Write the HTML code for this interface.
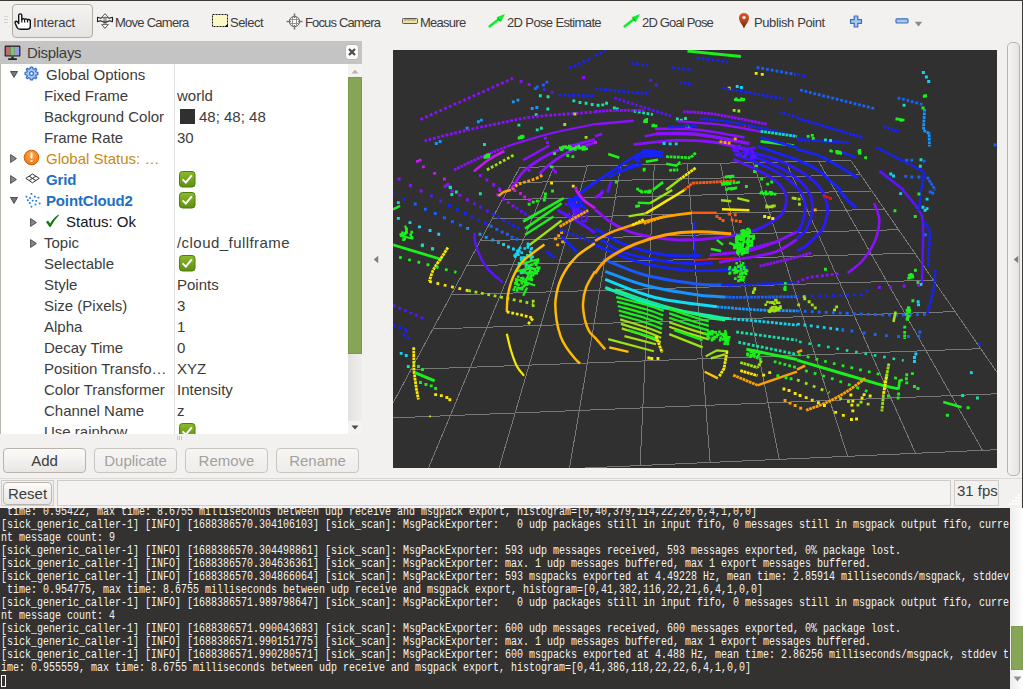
<!DOCTYPE html>
<html><head><meta charset="utf-8"><title>RViz</title>
<style>
html,body{margin:0;padding:0;}
body{width:1023px;height:689px;overflow:hidden;background:#f2f1f0;position:relative;font-family:"Liberation Sans","DejaVu Sans",sans-serif;color:#3c3c3c;}
.abs{position:absolute;}
#topline{left:0;top:0;width:1023px;height:1px;background:#3c3b37;}
#rightline{left:1022px;top:0;width:1px;height:508px;background:#3c3b37;}
.tb{position:absolute;top:15px;height:16px;line-height:16px;font-size:13px;letter-spacing:-0.6px;white-space:nowrap;color:#3c3c3c;}
.tbi{position:absolute;top:12px;width:18px;height:18px;}
#interact{left:12px;top:4px;width:79px;height:32px;border:1px solid #b3aca3;border-radius:4px;background:linear-gradient(#f4f3f2,#e6e4e2);}
#dtitle{left:0;top:41px;width:362px;height:23px;background:#c4c4c4;}
#dtitle span{position:absolute;left:27px;top:2px;font-size:15px;line-height:19px;letter-spacing:-0.3px;color:#3c3c3c;}
#closeb{left:346px;top:45px;width:12px;height:14px;border-radius:3px;background:#fbfbfa;box-shadow:0 0 0 0.5px #b5b0a8;}
#tree{left:1px;top:64px;width:347px;height:370px;background:#fff;overflow:hidden;}
#treeborder{left:0;top:64px;width:1px;height:370px;background:#b9b5ae;}
.row{position:absolute;left:0;width:347px;height:21px;line-height:21px;font-size:15px;white-space:nowrap;}
.row .l{position:absolute;top:0;}
.row .v{position:absolute;left:176px;top:0;}
#coldiv{left:173px;top:0;width:1px;height:370px;background:#e4e2df;}
.chk{position:absolute;left:177px;top:2px;width:17px;height:17px;}
.bold{font-weight:bold;color:#1e6fc3;letter-spacing:-0.15px;}
#sbar{left:348px;top:64px;width:14px;height:370px;background:linear-gradient(90deg,#e3e2e0,#efeeec);}
#sup{left:348px;top:64px;width:14px;height:13px;background:#f4f3f2;}
#sthumb{left:348px;top:77px;width:14px;height:277px;background:#87a556;box-shadow:inset 0 0 0 1px #7a9a49;}
#sdown{left:348px;top:421px;width:14px;height:13px;background:#f4f3f2;}
.btn{position:absolute;top:448px;height:23px;width:81px;border:1px solid #b9b3ab;border-radius:4px;background:linear-gradient(#fbfbfa,#e9e7e5);font-size:15px;line-height:23px;text-align:center;color:#3c3c3c;}
.btn.dis{color:#a3a19d;background:linear-gradient(#f6f5f4,#eeedeb);border-color:#c9c5bf;}
#view{left:393px;top:50px;width:604px;height:418px;background:#303030;overflow:hidden;}
#rtab{left:1007px;top:42px;width:13px;height:434px;border:1px solid #b9b3ab;border-radius:5px;background:linear-gradient(90deg,#f4f3f2,#e6e4e2);box-sizing:border-box;}
#sep{left:0;top:478px;width:1022px;height:1px;background:#dcdad7;}
#resetframe{left:1px;top:480px;width:53px;height:26px;border:1px solid #cfccc8;box-sizing:border-box;}
#resetb{left:3px;top:482px;width:47px;height:21px;border:1px solid #b9b3ab;border-radius:4px;background:linear-gradient(#fbfbfa,#e9e7e5);font-size:15px;line-height:21px;text-align:center;}
#statusin{left:57px;top:480px;width:894px;height:26px;border:1px solid #cfccc8;box-sizing:border-box;background:#f4f3f2;}
#fps{left:954px;top:480px;width:45px;height:26px;border:1px solid #cfccc8;box-sizing:border-box;font-size:15px;line-height:19px;text-indent:2px;white-space:nowrap;letter-spacing:0px;}
#term{left:0;top:508px;width:1010px;height:181px;background:#333230;overflow:hidden;}
#term pre{position:absolute;left:1px;top:-2px;margin:0;font-family:"Liberation Mono","DejaVu Sans Mono",monospace;font-size:12px;line-height:13px;color:#f4f4f2;transform:scaleX(0.8333);transform-origin:0 0;white-space:pre;}
#tsb{left:1010px;top:508px;width:13px;height:181px;background:linear-gradient(90deg,#ececec,#ffffff);}
#tthumb{left:1011px;top:626px;width:12px;height:44px;background:#87a556;box-shadow:inset 0 0 0 1px #7d9c4c;}
#cursor{left:1px;top:675px;width:5px;height:12px;border:1px solid #fff;box-sizing:border-box;}
</style></head>
<body>
<div class="abs" id="topline"></div>
<div class="abs" id="rightline"></div>

<!-- toolbar -->
<div class="abs" id="interact"></div>
<div class="tb" style="left:33px;letter-spacing:-0.17px">Interact</div>
<div class="tb" style="left:115px;letter-spacing:-0.74px">Move Camera</div>
<div class="tb" style="left:230px;letter-spacing:-0.52px">Select</div>
<div class="tb" style="left:305px;letter-spacing:-0.85px">Focus Camera</div>
<div class="tb" style="left:420px;letter-spacing:-0.74px">Measure</div>
<div class="tb" style="left:507px;letter-spacing:-0.63px">2D Pose Estimate</div>
<div class="tb" style="left:642px;letter-spacing:-0.83px">2D Goal Pose</div>
<div class="tb" style="left:754px;letter-spacing:-0.39px">Publish Point</div>

<!-- displays panel -->
<div class="abs" id="dtitle"><span>Displays</span></div>
<div class="abs" id="closeb"></div>
<div class="abs" id="treeborder"></div>
<div class="abs" id="tree">
<div class="abs" id="coldiv"></div>
<div class="row" style="top:0"><span class="l" style="left:45px">Global Options</span></div>
<div class="row" style="top:21px"><span class="l" style="left:43px">Fixed Frame</span><span class="v">world</span></div>
<div class="row" style="top:42px"><span class="l" style="left:43px">Background Color</span><span class="v" style="left:198px">48; 48; 48</span><span class="abs" style="left:179px;top:3px;width:15px;height:15px;background:#303030"></span></div>
<div class="row" style="top:63px"><span class="l" style="left:43px">Frame Rate</span><span class="v">30</span></div>
<div class="row" style="top:84px"><span class="l" style="left:45px;color:#c78a13">Global Status: …</span></div>
<div class="row" style="top:105px"><span class="l bold" style="left:45px">Grid</span></div>
<div class="row" style="top:126px"><span class="l bold" style="left:45px">PointCloud2</span></div>
<div class="row" style="top:147px"><span class="l" style="left:65px;color:#161616">Status: Ok</span></div>
<div class="row" style="top:168px"><span class="l" style="left:43px">Topic</span><span class="v" style="letter-spacing:0.45px">/cloud_fullframe</span></div>
<div class="row" style="top:189px"><span class="l" style="left:43px">Selectable</span></div>
<div class="row" style="top:210px"><span class="l" style="left:43px">Style</span><span class="v">Points</span></div>
<div class="row" style="top:231px"><span class="l" style="left:43px">Size (Pixels)</span><span class="v">3</span></div>
<div class="row" style="top:252px"><span class="l" style="left:43px">Alpha</span><span class="v">1</span></div>
<div class="row" style="top:273px"><span class="l" style="left:43px">Decay Time</span><span class="v">0</span></div>
<div class="row" style="top:294px"><span class="l" style="left:43px">Position Transfo…</span><span class="v">XYZ</span></div>
<div class="row" style="top:315px"><span class="l" style="left:43px">Color Transformer</span><span class="v">Intensity</span></div>
<div class="row" style="top:336px"><span class="l" style="left:43px">Channel Name</span><span class="v">z</span></div>
<div class="row" style="top:357px"><span class="l" style="left:43px">Use rainbow</span></div>
<!-- expand arrows -->
<svg class="abs" style="left:9px;top:7px" width="8" height="7" viewBox="0 0 8 7"><path d="M0.5 0.5 H7.5 L4 6.4 Z" fill="#777" stroke="#444" stroke-width="0.9"/></svg>
<svg class="abs" style="left:9px;top:133px" width="8" height="7" viewBox="0 0 8 7"><path d="M0.5 0.5 H7.5 L4 6.4 Z" fill="#777" stroke="#444" stroke-width="0.9"/></svg>
<svg class="abs" style="left:9px;top:90px" width="7" height="9" viewBox="0 0 7 9"><path d="M0.6 0.6 V8.4 L6.4 4.5 Z" fill="#888" stroke="#444" stroke-width="0.9"/></svg>
<svg class="abs" style="left:9px;top:111px" width="7" height="9" viewBox="0 0 7 9"><path d="M0.6 0.6 V8.4 L6.4 4.5 Z" fill="#888" stroke="#444" stroke-width="0.9"/></svg>
<svg class="abs" style="left:29px;top:154px" width="7" height="9" viewBox="0 0 7 9"><path d="M0.6 0.6 V8.4 L6.4 4.5 Z" fill="#888" stroke="#444" stroke-width="0.9"/></svg>
<svg class="abs" style="left:29px;top:175px" width="7" height="9" viewBox="0 0 7 9"><path d="M0.6 0.6 V8.4 L6.4 4.5 Z" fill="#888" stroke="#444" stroke-width="0.9"/></svg>
<!-- gear -->
<svg class="abs" style="left:23px;top:2px" width="15" height="15" viewBox="-7.5 -7.5 15 15"><g fill="#a9c6ee" stroke="#2f6dc6" stroke-width="1.25"><path d="M-1.1 -6.4 H1.1 L1.5 -4.7 L2.6 -4.2 L4.1 -5.2 L5.2 -4.1 L4.2 -2.6 L4.7 -1.5 L6.4 -1.1 V1.1 L4.7 1.5 L4.2 2.6 L5.2 4.1 L4.1 5.2 L2.6 4.2 L1.5 4.7 L1.1 6.4 H-1.1 L-1.5 4.7 L-2.6 4.2 L-4.1 5.2 L-5.2 4.1 L-4.2 2.6 L-4.7 1.5 L-6.4 1.1 V-1.1 L-4.7 -1.5 L-4.2 -2.6 L-5.2 -4.1 L-4.1 -5.2 L-2.6 -4.2 L-1.5 -4.7 Z" stroke-linejoin="round"/><circle r="1.9" fill="#fff"/></g></svg>
<!-- warning -->
<svg class="abs" style="left:22px;top:85px" width="17" height="17" viewBox="0 0 17 17"><defs><radialGradient id="og" cx="0.5" cy="0.35" r="0.7"><stop offset="0" stop-color="#fca84a"/><stop offset="1" stop-color="#f0730a"/></radialGradient></defs><circle cx="8.5" cy="8.5" r="7.3" fill="url(#og)" stroke="#cf5e06" stroke-width="1"/><rect x="7.5" y="3.6" width="2" height="6" rx="0.6" fill="#fff"/><rect x="7.5" y="11" width="2" height="2.1" rx="0.6" fill="#fff"/></svg>
<!-- grid -->
<svg class="abs" style="left:24px;top:109px" width="15" height="11" viewBox="0 0 15 11"><path d="M0.8 5.3 L7.5 1 L14.2 5.3 L7.5 9.8 Z M4.1 3.2 L10.9 7.6 M10.9 3.2 L4.1 7.6" fill="#fff" stroke="#333" stroke-width="1" stroke-linejoin="round"/></svg>
<!-- pointcloud -->
<svg class="abs" style="left:24px;top:128px" width="16" height="16" viewBox="0 0 16 16"><g fill="#1c79e0"><rect x="5.6" y="1" width="1.7" height="1.7"/><rect x="0.6" y="3.8" width="1.7" height="1.7"/><rect x="4.2" y="5.2" width="1.7" height="1.7"/><rect x="9" y="3.8" width="1.7" height="1.7"/><rect x="12.6" y="4.8" width="1.7" height="1.7"/><rect x="2" y="7.3" width="1.7" height="1.7"/><rect x="6.8" y="7.8" width="1.7" height="1.7"/><rect x="10.4" y="8" width="1.7" height="1.7"/><rect x="4" y="10.2" width="1.7" height="1.7"/><rect x="9.6" y="11.6" width="1.7" height="1.7"/><rect x="13.8" y="10.6" width="1.7" height="1.7"/><rect x="5.6" y="13.8" width="1.7" height="1.7"/></g></svg>
<!-- check -->
<svg class="abs" style="left:44px;top:150px" width="15" height="14" viewBox="0 0 15 14"><path d="M1 8 L3 6.6 L5.2 9.6 Q8.6 3.6 13.6 0.6 L14 1.2 Q9.4 5.6 5.6 13 L4.6 13 Z" fill="#137a13"/></svg>
<!-- checkboxes -->
<svg class="abs" style="left:178px;top:107px" width="17" height="17" viewBox="0 0 17 17"><defs><linearGradient id="cg" x1="0" y1="0" x2="0" y2="1"><stop offset="0" stop-color="#8dba2d"/><stop offset="1" stop-color="#5d8f10"/></linearGradient></defs><rect x="0.5" y="0.5" width="15.5" height="15.5" rx="3" fill="url(#cg)" stroke="#4f7d0e" stroke-width="1"/><path d="M3.6 8.4 L6.8 11.6 L12.8 4.4" fill="none" stroke="#fff" stroke-width="2"/></svg>
<svg class="abs" style="left:178px;top:128px" width="17" height="17" viewBox="0 0 17 17"><rect x="0.5" y="0.5" width="15.5" height="15.5" rx="3" fill="url(#cg)" stroke="#4f7d0e" stroke-width="1"/><path d="M3.6 8.4 L6.8 11.6 L12.8 4.4" fill="none" stroke="#fff" stroke-width="2"/></svg>
<svg class="abs" style="left:178px;top:191px" width="17" height="17" viewBox="0 0 17 17"><rect x="0.5" y="0.5" width="15.5" height="15.5" rx="3" fill="url(#cg)" stroke="#4f7d0e" stroke-width="1"/><path d="M3.6 8.4 L6.8 11.6 L12.8 4.4" fill="none" stroke="#fff" stroke-width="2"/></svg>
<svg class="abs" style="left:178px;top:359px" width="17" height="17" viewBox="0 0 17 17"><rect x="0.5" y="0.5" width="15.5" height="15.5" rx="3" fill="url(#cg)" stroke="#4f7d0e" stroke-width="1"/><path d="M3.6 8.4 L6.8 11.6 L12.8 4.4" fill="none" stroke="#fff" stroke-width="2"/></svg>

</div>
<div class="abs" id="sbar"></div>
<div class="abs" id="sup"></div>
<div class="abs" id="sthumb"></div>
<div class="abs" id="sdown"></div>

<div class="btn" style="left:3px">Add</div>
<div class="btn dis" style="left:94px">Duplicate</div>
<div class="btn dis" style="left:185px">Remove</div>
<div class="btn dis" style="left:276px">Rename</div>

<!-- 3D view -->
<div class="abs" id="view">
<svg style="position:absolute;left:0;top:0" width="604" height="418" viewBox="393 50 604 418"><path d="M352.5 478.3L519.8 167.4M425.6 475.0L553.7 166.7M497.9 471.8L587.4 166.0M569.4 468.7L620.9 165.3M640.1 465.5L654.3 164.6M710.1 462.4L687.5 163.9M779.3 459.3L720.5 163.2M847.7 456.3L753.3 162.5M915.5 453.3L786.0 161.8M982.5 450.3L818.5 161.1M1048.8 447.4L850.8 160.5M352.5 478.3L1048.8 447.4M384.8 418.2L1011.4 393.2M411.1 369.4L980.7 348.7M432.8 329.0L955.1 311.6M451.2 294.9L933.4 280.1M466.8 265.9L914.8 253.1M480.3 240.8L898.6 229.7M492.1 219.0L884.4 209.2M502.4 199.7L871.9 191.0M511.6 182.7L860.8 174.9M519.8 167.4L850.8 160.5" stroke="#787878" stroke-width="1" fill="none" shape-rendering="crispEdges"/>
<path d="M420.4 119.5 L512.9 78.4" stroke="#8a10ff" stroke-width="2.8" fill="none" stroke-dasharray="2.8 2.4"/>
<path d="M519.6 80.0h2.9v2.9h-2.9zM527.7 83.1h2.9v2.9h-2.9zM582.2 76.0h2.9v2.9h-2.9z" fill="#8a10ff"/>
<path d="M568.8 68.3 L592.1 58.1" stroke="#1622ff" stroke-width="2.8" fill="none" stroke-dasharray="2.8 2.2"/>
<path d="M533.8 87.2h2.9v2.9h-2.9zM541.9 83.5h2.9v2.9h-2.9zM545.4 80.7h2.9v2.9h-2.9zM535.8 85.5h2.9v2.9h-2.9z" fill="#1a62ff"/>
<path d="M542.9 88.2h2.9v2.9h-2.9zM550.7 90.8h2.9v2.9h-2.9z" fill="#5a14ff"/>
<path d="M558.6 95.1 L595.0 95.7" stroke="#1622ff" stroke-width="2.8" fill="none" stroke-dasharray="2.8 1.8"/>
<path d="M538.9 94.3h2.9v2.9h-2.9zM546.6 95.3h2.9v2.9h-2.9zM572.4 99.4h2.9v2.9h-2.9zM578.5 101.0h2.9v2.9h-2.9zM584.6 101.8h2.9v2.9h-2.9zM590.7 103.0h2.9v2.9h-2.9zM546.4 107.5h2.9v2.9h-2.9zM534.8 113.2h2.9v2.9h-2.9zM517.5 123.7h2.9v2.9h-2.9zM535.8 128.4h2.9v2.9h-2.9zM539.9 126.8h2.9v2.9h-2.9zM483.0 143.0h2.9v2.9h-2.9z" fill="#14e2a4"/>
<path d="M511.9 100.4h2.9v2.9h-2.9zM516.5 98.7h2.9v2.9h-2.9zM530.7 107.1h2.9v2.9h-2.9zM535.4 106.1h2.9v2.9h-2.9zM476.9 120.3h2.9v2.9h-2.9zM479.9 118.7h2.9v2.9h-2.9zM465.7 126.8h2.9v2.9h-2.9zM434.8 142.0h2.9v2.9h-2.9zM438.7 140.0h2.9v2.9h-2.9z" fill="#1696ff"/>
<path d="M424.5 140.8 C429.4 139.6 442.3 136.1 454.0 133.3 C465.6 130.5 481.1 126.9 494.6 124.2 C508.2 121.4 518.5 118.7 535.2 116.7 C552.0 114.6 585.0 112.8 595.0 112.0" stroke="#8a10ff" stroke-width="2.8" fill="none" stroke-dasharray="2.8 1.6"/>
<path d="M454.0 169.9 C459.0 167.5 475.6 159.5 484.4 155.7 C493.3 151.8 503.1 148.2 506.8 146.7" stroke="#8a10ff" stroke-width="2.8" fill="none" stroke-dasharray="2.8 0.8"/>
<path d="M506.8 146.7 C508.8 146.0 510.9 144.9 519.0 142.5 C527.1 140.1 542.9 135.3 555.6 132.3 C568.2 129.3 588.4 125.5 595.0 124.2" stroke="#8a10ff" stroke-width="2.2" fill="none" stroke-linecap="butt"/>
<path d="M473.9 171.5 C476.3 169.6 483.4 163.2 488.5 159.7 C493.6 156.3 501.7 152.5 504.4 151.0" stroke="#c818f0" stroke-width="2.6" fill="none" stroke-linecap="butt"/>
<path d="M484.8 154.6h2.6v2.6h-2.6zM486.6 153.4h2.6v2.6h-2.6zM486.2 154.4h2.6v2.6h-2.6zM483.7 156.2h2.6v2.6h-2.6zM483.5 156.1h2.6v2.6h-2.6zM486.1 155.7h2.6v2.6h-2.6zM483.7 155.4h2.6v2.6h-2.6zM487.4 155.3h2.6v2.6h-2.6zM486.5 154.3h2.6v2.6h-2.6zM488.0 153.2h2.6v2.6h-2.6zM485.5 156.0h2.6v2.6h-2.6zM484.5 155.9h2.6v2.6h-2.6zM486.8 154.1h2.6v2.6h-2.6zM486.0 153.7h2.6v2.6h-2.6z" fill="#1cf01c"/>
<path d="M521.1 135.2h2.6v2.6h-2.6zM519.2 136.2h2.6v2.6h-2.6zM519.7 135.3h2.6v2.6h-2.6zM521.9 135.6h2.6v2.6h-2.6zM518.8 136.3h2.6v2.6h-2.6zM520.5 136.5h2.6v2.6h-2.6zM521.2 134.8h2.6v2.6h-2.6zM519.9 136.4h2.6v2.6h-2.6zM518.2 136.2h2.6v2.6h-2.6zM517.7 136.8h2.6v2.6h-2.6z" fill="#1cf01c"/>
<path d="M486.9 169.9 L514.5 154.7" stroke="#9ee212" stroke-width="2.8" fill="none" stroke-dasharray="2.8 1.8"/>
<path d="M523.1 160.1 L549.5 145.5" stroke="#8a10ff" stroke-width="2.4" fill="none" stroke-linecap="butt"/>
<path d="M544.0 136.9h2.9v2.9h-2.9zM546.0 141.0h2.9v2.9h-2.9z" fill="#8a10ff"/>
<path d="M510.9 190.0 C512.9 187.0 518.3 177.0 523.1 171.9 C527.8 166.9 533.2 163.5 539.3 159.7 C545.4 156.0 550.4 153.0 559.6 149.6 C568.9 146.2 589.1 141.1 595.0 139.4" stroke="#8a10ff" stroke-width="2.8" fill="none" stroke-linecap="butt"/>
<path d="M539.3 174.0 C541.3 172.1 546.4 166.5 551.5 162.8 C556.6 159.1 562.5 155.0 569.8 151.6 C577.0 148.2 590.8 144.0 595.0 142.5" stroke="#8a10ff" stroke-width="2.8" fill="none" stroke-linecap="butt"/>
<path d="M580.1 146.9h2.6v2.6h-2.6zM583.2 145.9h2.6v2.6h-2.6zM578.1 147.0h2.6v2.6h-2.6zM574.8 146.5h2.6v2.6h-2.6zM571.8 147.3h2.6v2.6h-2.6zM560.1 147.5h2.6v2.6h-2.6zM581.7 145.8h2.6v2.6h-2.6zM569.3 147.3h2.6v2.6h-2.6zM559.0 146.5h2.6v2.6h-2.6zM562.0 145.6h2.6v2.6h-2.6zM569.5 148.2h2.6v2.6h-2.6zM560.6 146.4h2.6v2.6h-2.6zM574.0 148.2h2.6v2.6h-2.6zM581.6 148.1h2.6v2.6h-2.6zM566.3 146.3h2.6v2.6h-2.6zM568.5 148.2h2.6v2.6h-2.6zM563.3 145.6h2.6v2.6h-2.6zM565.0 146.6h2.6v2.6h-2.6zM575.1 145.7h2.6v2.6h-2.6zM568.8 146.9h2.6v2.6h-2.6zM585.4 147.4h2.6v2.6h-2.6zM573.0 147.1h2.6v2.6h-2.6zM577.6 144.8h2.6v2.6h-2.6zM583.9 147.8h2.6v2.6h-2.6zM583.2 147.9h2.6v2.6h-2.6zM569.5 146.2h2.6v2.6h-2.6zM561.3 147.2h2.6v2.6h-2.6zM564.3 145.3h2.6v2.6h-2.6zM568.0 144.8h2.6v2.6h-2.6zM561.2 146.1h2.6v2.6h-2.6z" fill="#1cf01c"/>
<path d="M560.2 148.1h2.9v2.9h-2.9zM566.3 154.2h2.9v2.9h-2.9zM571.4 155.2h2.9v2.9h-2.9zM553.1 152.2h2.9v2.9h-2.9zM550.1 165.4h2.9v2.9h-2.9z" fill="#1cf01c"/>
<path d="M415.9 159.9h2.9v2.9h-2.9zM418.6 158.7h2.9v2.9h-2.9zM422.0 165.4h2.9v2.9h-2.9zM433.2 171.9h2.9v2.9h-2.9zM443.0 177.6h2.9v2.9h-2.9z" fill="#c818f0"/>
<path d="M397.6 177.6h2.9v2.9h-2.9zM408.8 183.7h2.9v2.9h-2.9zM445.4 183.7h2.9v2.9h-2.9zM446.8 182.7h2.9v2.9h-2.9z" fill="#8a10ff"/>
<path d="M449.1 186.3h2.9v2.9h-2.9z" fill="#14e2a4"/>
<path d="M478.9 174.1h2.9v2.9h-2.9zM485.4 178.6h2.9v2.9h-2.9zM492.1 183.1h2.9v2.9h-2.9zM498.2 187.7h2.9v2.9h-2.9zM527.7 168.9h2.9v2.9h-2.9zM554.1 170.5h2.9v2.9h-2.9zM552.1 168.4h2.9v2.9h-2.9z" fill="#8a10ff"/>
<path d="M511.9 189.2 C513.1 188.4 514.9 185.9 519.0 184.1 C523.1 182.3 532.2 180.1 536.3 178.4 C540.3 176.8 542.2 175.0 543.4 174.4" stroke="#ffa200" stroke-width="2.8" fill="none" stroke-dasharray="2.8 1.6"/>
<path d="M550.1 181.7h2.9v2.9h-2.9zM571.8 184.7h2.9v2.9h-2.9z" fill="#f6ea00"/>
<path d="M574.4 186.7h2.9v2.9h-2.9z" fill="#c818f0"/>
<path d="M584.0 190.0 L595.0 182.1" stroke="#1622ff" stroke-width="2.6" fill="none" stroke-linecap="butt"/>
<path d="M563.3 123.1h2.9v2.9h-2.9zM573.4 112.6h2.9v2.9h-2.9zM584.6 135.9h2.9v2.9h-2.9z" fill="#9ee212"/>
<path d="M687.5 51.0 L740.9 56.5" stroke="#1cf01c" stroke-width="2.8" fill="none" stroke-linecap="butt"/>
<path d="M696.6 58.1 L728.1 61.8" stroke="#1622ff" stroke-width="2.8" fill="none" stroke-dasharray="2.8 2.2"/>
<path d="M631.2 63.2 L648.2 65.2" stroke="#1622ff" stroke-width="2.8" fill="none" stroke-dasharray="2.8 2.2"/>
<path d="M672.2 67.9 L692.5 69.7" stroke="#1622ff" stroke-width="2.8" fill="none" stroke-dasharray="2.8 2.2"/>
<path d="M679.3 82.1 L692.5 84.5" stroke="#1622ff" stroke-width="2.8" fill="none" stroke-dasharray="2.8 1.7"/>
<path d="M595.0 55.7 L605.2 51.0" stroke="#1622ff" stroke-width="2.8" fill="none" stroke-dasharray="2.8 2.2"/>
<path d="M649.4 79.0h2.9v2.9h-2.9zM654.9 83.5h2.9v2.9h-2.9z" fill="#5a14ff"/>
<path d="M595.0 88.6 L645.8 93.7 L650.3 90.2" stroke="#1622ff" stroke-width="2.8" fill="none" stroke-dasharray="2.8 1.8"/>
<path d="M614.3 97.8 C617.9 98.9 626.2 101.8 635.6 104.9 C645.1 107.9 665.3 114.2 671.2 116.0" stroke="#5a14ff" stroke-width="2.8" fill="none" stroke-dasharray="2.8 1.6"/>
<path d="M596.6 103.8h2.9v2.9h-2.9zM601.3 103.4h2.9v2.9h-2.9zM605.1 101.8h2.9v2.9h-2.9zM612.9 106.5h2.9v2.9h-2.9zM615.9 107.5h2.9v2.9h-2.9zM675.9 117.6h2.9v2.9h-2.9zM679.9 118.7h2.9v2.9h-2.9zM684.0 117.0h2.9v2.9h-2.9z" fill="#14e2a4"/>
<path d="M633.6 111.0 L652.9 114.6" stroke="#14e2a4" stroke-width="2.8" fill="none" stroke-dasharray="2.8 1.6"/>
<path d="M595.0 111.6 C598.4 111.4 607.2 110.6 615.3 110.4 C623.4 110.2 639.0 110.4 643.8 110.4" stroke="#8a10ff" stroke-width="2.8" fill="none" stroke-dasharray="2.8 0.8"/>
<path d="M595.0 124.2 L633.6 120.7" stroke="#8a10ff" stroke-width="2.4" fill="none" stroke-linecap="butt"/>
<path d="M595.0 136.4 L602.1 133.7" stroke="#8a10ff" stroke-width="2.6" fill="none" stroke-linecap="butt"/>
<path d="M594.2 141.0h2.9v2.9h-2.9z" fill="#c818f0"/>
<path d="M644.5 118.9h2.6v2.6h-2.6zM643.2 120.5h2.6v2.6h-2.6zM643.4 119.7h2.6v2.6h-2.6zM644.3 119.9h2.6v2.6h-2.6zM643.5 120.0h2.6v2.6h-2.6zM645.5 118.1h2.6v2.6h-2.6zM644.2 119.2h2.6v2.6h-2.6zM644.1 118.9h2.6v2.6h-2.6zM645.3 120.5h2.6v2.6h-2.6z" fill="#1cf01c"/>
<path d="M654.8 124.6h2.6v2.6h-2.6zM651.9 124.1h2.6v2.6h-2.6zM651.4 124.7h2.6v2.6h-2.6zM653.2 124.7h2.6v2.6h-2.6zM652.2 123.8h2.6v2.6h-2.6zM654.8 124.8h2.6v2.6h-2.6zM654.6 124.7h2.6v2.6h-2.6z" fill="#1cf01c"/>
<path d="M685.1 125.5h2.6v2.6h-2.6zM685.6 124.7h2.6v2.6h-2.6zM685.2 125.8h2.6v2.6h-2.6zM688.0 125.4h2.6v2.6h-2.6zM688.0 125.3h2.6v2.6h-2.6zM685.0 125.1h2.6v2.6h-2.6z" fill="#1cf01c"/>
<path d="M756.6 67.3 L795.2 74.4" stroke="#1a62ff" stroke-width="2.8" fill="none" stroke-dasharray="2.8 2.0"/>
<path d="M754.7 71.9h2.9v2.9h-2.9zM760.8 72.9h2.9v2.9h-2.9zM727.7 86.8h2.9v2.9h-2.9z" fill="#f6ea00"/>
<path d="M735.8 85.1h2.9v2.9h-2.9zM739.9 86.1h2.9v2.9h-2.9z" fill="#14d2f2"/>
<path d="M722.6 88.2 L784.0 98.8" stroke="#1622ff" stroke-width="2.8" fill="none" stroke-dasharray="2.8 1.6"/>
<path d="M788.6 98.3h2.9v2.9h-2.9z" fill="#1622ff"/>
<path d="M735.0 97.5h2.6v2.6h-2.6zM739.2 98.9h2.6v2.6h-2.6zM741.3 98.0h2.6v2.6h-2.6zM739.5 98.7h2.6v2.6h-2.6zM733.9 98.4h2.6v2.6h-2.6zM742.0 98.7h2.6v2.6h-2.6zM740.4 98.0h2.6v2.6h-2.6zM734.8 98.7h2.6v2.6h-2.6zM736.3 98.7h2.6v2.6h-2.6zM742.6 97.9h2.6v2.6h-2.6zM737.0 99.0h2.6v2.6h-2.6zM740.2 97.4h2.6v2.6h-2.6z" fill="#1cf01c"/>
<path d="M732.7 108.9h2.9v2.9h-2.9zM737.4 109.5h2.9v2.9h-2.9z" fill="#9ee212"/>
<path d="M778.9 112.0 L797.0 117.1" stroke="#1622ff" stroke-width="2.8" fill="none" stroke-dasharray="2.8 1.6"/>
<path d="M683.4 111.6 C689.0 112.1 703.0 112.5 716.9 114.6 C730.8 116.7 758.4 122.6 766.7 124.2" stroke="#8a10ff" stroke-width="2.8" fill="none" stroke-dasharray="2.8 0.6"/>
<path d="M699.7 118.5 C705.9 119.3 721.0 120.2 737.2 123.2 C753.5 126.1 787.0 134.2 797.0 136.4" stroke="#1622ff" stroke-width="2.6" fill="none" stroke-dasharray="2.6 0.6"/>
<path d="M677.3 121.1 C685.3 121.8 710.7 123.3 725.1 125.2 C739.4 127.1 757.2 131.1 763.7 132.3" stroke="#8a10ff" stroke-width="2.4" fill="none" stroke-linecap="butt"/>
<path d="M654.9 128.8 C661.9 129.0 681.7 128.2 696.6 129.7 C711.5 131.1 736.4 136.1 744.4 137.4" stroke="#8a10ff" stroke-width="2.6" fill="none" stroke-linecap="butt"/>
<path d="M656.0 133.7 C662.7 133.8 681.0 132.7 696.6 134.3 C712.2 136.0 740.6 142.0 749.4 143.5" stroke="#8a10ff" stroke-width="3.4" fill="none" stroke-linecap="butt"/>
<path d="M644.8 136.4 L660.0 133.3" stroke="#8a10ff" stroke-width="2.4" fill="none" stroke-linecap="butt"/>
<path d="M633.6 144.5 C640.7 143.8 662.4 140.8 676.3 140.4 C690.2 140.1 705.4 140.9 716.9 142.5 C728.4 144.0 740.6 148.4 745.4 149.6" stroke="#8a10ff" stroke-width="2.8" fill="none" stroke-linecap="butt"/>
<path d="M668.2 127.2 L696.6 125.6" stroke="#1622ff" stroke-width="2.8" fill="none" stroke-dasharray="2.8 0.6"/>
<path d="M662.6 142.0h2.9v2.9h-2.9zM668.7 142.4h2.9v2.9h-2.9zM674.8 142.4h2.9v2.9h-2.9z" fill="#14d2f2"/>
<path d="M719.5 140.4h2.9v2.9h-2.9zM723.6 141.0h2.9v2.9h-2.9zM727.7 141.6h2.9v2.9h-2.9zM733.8 137.4h2.9v2.9h-2.9z" fill="#ffa200"/>
<path d="M743.6 125.4h1.6v1.6h-1.6zM748.6 126.4h1.6v1.6h-1.6z" fill="#e41212"/>
<path d="M760.6 131.3 L797.0 136.4" stroke="#14e2a4" stroke-width="2.8" fill="none" stroke-dasharray="2.8 0.8"/>
<path d="M760.6 141.4 L794.1 145.5" stroke="#1cf01c" stroke-width="2.6" fill="none" stroke-linecap="butt"/>
<path d="M760.6 137.4 L797.0 147.5" stroke="#1622ff" stroke-width="2.6" fill="none" stroke-linecap="butt"/>
<path d="M757.6 146.5 L797.0 159.7" stroke="#1622ff" stroke-width="2.6" fill="none" stroke-linecap="butt"/>
<path d="M743.3 149.6 L755.5 147.5" stroke="#5a14ff" stroke-width="2.6" fill="none" stroke-linecap="butt"/>
<path d="M569.6 208.3 C570.4 206.7 571.9 201.6 574.3 198.7 C576.7 195.8 580.3 193.5 583.9 190.7 C587.5 187.9 591.5 185.0 595.9 181.9 C600.3 178.9 605.5 175.5 610.3 172.3 C615.1 169.1 619.9 165.8 624.7 162.7 C629.5 159.7 634.5 155.9 639.0 154.0 C643.6 152.0 649.7 151.6 651.8 151.1" stroke="#1622ff" stroke-width="2.6" fill="none" stroke-linecap="butt"/>
<path d="M608.7 177.1 C610.6 176.2 616.4 173.3 619.9 171.9 C623.3 170.4 625.7 169.6 629.5 168.3 C633.2 167.1 640.1 165.0 642.2 164.3" stroke="#1622ff" stroke-width="2.6" fill="none" stroke-linecap="butt"/>
<path d="M634.2 158.4 C636.6 158.0 643.8 156.0 648.6 155.6 C653.4 155.1 660.6 155.8 663.0 155.9" stroke="#1622ff" stroke-width="2.6" fill="none" stroke-linecap="butt"/>
<path d="M599.1 197.9 L603.1 189.9" stroke="#5a14ff" stroke-width="3.4" fill="none" stroke-linecap="butt"/>
<path d="M607.4 192.6 L611.1 181.4" stroke="#5a14ff" stroke-width="3.0" fill="none" stroke-linecap="butt"/>
<path d="M642.2 150.4 L663.0 152.4" stroke="#1622ff" stroke-width="2.6" fill="none" stroke-linecap="butt"/>
<path d="M571.0 208.8h3.0v3.0h-3.0zM573.9 204.4h3.0v3.0h-3.0zM582.8 206.0h3.0v3.0h-3.0zM576.4 210.5h3.0v3.0h-3.0zM575.1 209.5h3.0v3.0h-3.0zM580.7 199.0h3.0v3.0h-3.0zM572.5 200.3h3.0v3.0h-3.0zM572.3 205.0h3.0v3.0h-3.0zM572.6 202.3h3.0v3.0h-3.0zM573.9 202.9h3.0v3.0h-3.0zM577.2 210.0h3.0v3.0h-3.0zM574.9 210.3h3.0v3.0h-3.0zM576.1 204.1h3.0v3.0h-3.0zM576.4 195.9h3.0v3.0h-3.0zM575.2 198.5h3.0v3.0h-3.0zM571.3 203.2h3.0v3.0h-3.0zM579.3 204.5h3.0v3.0h-3.0zM573.5 203.9h3.0v3.0h-3.0zM576.8 208.1h3.0v3.0h-3.0zM570.4 204.5h3.0v3.0h-3.0zM572.4 200.0h3.0v3.0h-3.0zM580.0 203.7h3.0v3.0h-3.0z" fill="#1622ff"/>
<path d="M629.9 164.8h3.0v3.0h-3.0zM637.3 159.6h3.0v3.0h-3.0zM630.6 163.2h3.0v3.0h-3.0zM628.6 165.1h3.0v3.0h-3.0zM626.9 165.1h3.0v3.0h-3.0zM628.3 166.5h3.0v3.0h-3.0zM633.3 163.7h3.0v3.0h-3.0zM630.2 165.6h3.0v3.0h-3.0zM635.1 159.2h3.0v3.0h-3.0zM619.1 168.4h3.0v3.0h-3.0zM617.6 168.2h3.0v3.0h-3.0zM618.5 169.9h3.0v3.0h-3.0z" fill="#1622ff"/>
<path d="M656.7 153.9h3.0v3.0h-3.0zM642.6 153.1h3.0v3.0h-3.0zM653.9 150.5h3.0v3.0h-3.0zM648.0 152.1h3.0v3.0h-3.0zM642.8 151.8h3.0v3.0h-3.0zM650.7 151.4h3.0v3.0h-3.0zM643.5 151.3h3.0v3.0h-3.0zM651.5 151.9h3.0v3.0h-3.0zM653.1 152.2h3.0v3.0h-3.0zM641.5 151.1h3.0v3.0h-3.0zM645.2 150.5h3.0v3.0h-3.0zM648.6 154.0h3.0v3.0h-3.0z" fill="#1622ff"/>
<path d="M608.2 154.0 L619.4 157.7" stroke="#1cf01c" stroke-width="2.6" fill="none" stroke-linecap="butt"/>
<path d="M645.8 161.8 L658.0 159.7" stroke="#1cf01c" stroke-width="2.6" fill="none" stroke-linecap="butt"/>
<path d="M666.1 156.7 L690.5 157.7 L696.0 152.6" stroke="#1cf01c" stroke-width="2.8" fill="none" stroke-dasharray="2.8 0.8"/>
<path d="M666.1 163.8 L676.3 165.8 L680.3 161.8" stroke="#1cf01c" stroke-width="2.4" fill="none" stroke-linecap="butt"/>
<path d="M669.2 170.3 L678.3 169.9" stroke="#1cf01c" stroke-width="2.8" fill="none" stroke-dasharray="2.8 0.8"/>
<path d="M643.2 167.7h2.6v2.6h-2.6zM642.6 168.6h2.6v2.6h-2.6zM642.9 168.0h2.6v2.6h-2.6zM642.8 168.8h2.6v2.6h-2.6z" fill="#1cf01c"/>
<path d="M695.6 167.9 L680.3 179.0" stroke="#f6ea00" stroke-width="2.8" fill="none" stroke-dasharray="2.8 0.6"/>
<path d="M680.3 179.0 L666.1 190.0" stroke="#9ee212" stroke-width="2.4" fill="none" stroke-linecap="butt"/>
<path d="M652.9 190.0 L663.1 182.1" stroke="#1cf01c" stroke-width="2.6" fill="none" stroke-linecap="butt"/>
<path d="M684.4 190.0 L692.5 183.1 L735.2 181.1" stroke="#ff5a12" stroke-width="2.8" fill="none" stroke-dasharray="2.8 0.6"/>
<path d="M727.7 175.3h2.6v2.6h-2.6zM728.9 176.1h2.6v2.6h-2.6zM725.5 175.3h2.6v2.6h-2.6zM728.5 175.0h2.6v2.6h-2.6zM726.1 175.5h2.6v2.6h-2.6zM731.1 174.7h2.6v2.6h-2.6zM728.1 175.0h2.6v2.6h-2.6zM730.9 175.2h2.6v2.6h-2.6zM724.7 176.0h2.6v2.6h-2.6zM731.8 174.9h2.6v2.6h-2.6z" fill="#1cf01c"/>
<path d="M728.8 182.5h2.6v2.6h-2.6zM726.9 182.0h2.6v2.6h-2.6zM726.0 182.8h2.6v2.6h-2.6zM732.6 181.7h2.6v2.6h-2.6zM727.1 181.7h2.6v2.6h-2.6zM721.1 183.1h2.6v2.6h-2.6zM724.3 181.6h2.6v2.6h-2.6zM735.6 181.5h2.6v2.6h-2.6zM724.8 181.7h2.6v2.6h-2.6zM725.1 182.1h2.6v2.6h-2.6zM722.6 182.3h2.6v2.6h-2.6zM737.4 181.0h2.6v2.6h-2.6zM725.3 181.9h2.6v2.6h-2.6zM728.4 181.9h2.6v2.6h-2.6zM723.4 182.4h2.6v2.6h-2.6zM721.3 182.3h2.6v2.6h-2.6z" fill="#1cf01c"/>
<path d="M727.4 187.2h2.6v2.6h-2.6zM730.9 187.1h2.6v2.6h-2.6zM732.9 187.0h2.6v2.6h-2.6zM732.6 187.5h2.6v2.6h-2.6zM728.5 187.2h2.6v2.6h-2.6zM732.6 187.0h2.6v2.6h-2.6zM734.6 186.6h2.6v2.6h-2.6zM732.8 187.3h2.6v2.6h-2.6zM725.6 188.2h2.6v2.6h-2.6zM730.0 187.9h2.6v2.6h-2.6z" fill="#1cf01c"/>
<path d="M744.9 185.1h2.9v2.9h-2.9zM760.2 177.6h2.9v2.9h-2.9zM766.3 182.7h2.9v2.9h-2.9zM770.3 180.6h2.9v2.9h-2.9zM755.1 164.4h2.9v2.9h-2.9zM753.1 170.1h2.9v2.9h-2.9zM614.9 180.6h2.9v2.9h-2.9zM636.2 187.7h2.9v2.9h-2.9z" fill="#1cf01c"/>
<path d="M796.6 73.3h2.9v2.9h-2.9zM802.1 74.6h2.9v2.9h-2.9z" fill="#1622ff"/>
<path d="M800.0 90.0 L874.2 108.5" stroke="#1a62ff" stroke-width="2.8" fill="none" stroke-dasharray="2.8 1.8"/>
<path d="M797.0 118.1 L863.0 137.8" stroke="#1622ff" stroke-width="2.8" fill="none" stroke-dasharray="2.8 0.8"/>
<path d="M797.0 139.4 L848.8 142.5" stroke="#1622ff" stroke-width="2.8" fill="none" stroke-dasharray="2.8 0.6"/>
<path d="M806.7 134.9h2.9v2.9h-2.9zM810.8 133.9h2.9v2.9h-2.9zM811.8 136.9h2.9v2.9h-2.9z" fill="#1cf01c"/>
<path d="M824.0 138.4h2.9v2.9h-2.9zM829.1 139.0h2.9v2.9h-2.9z" fill="#14e2a4"/>
<path d="M797.0 149.2 C801.4 150.6 813.3 152.9 823.4 157.7 C833.6 162.5 852.2 174.6 858.0 178.0" stroke="#1622ff" stroke-width="2.8" fill="none" stroke-linecap="butt"/>
<path d="M797.0 159.7 C800.4 161.4 810.0 164.8 817.3 169.9 C824.6 174.9 836.8 186.7 840.7 190.0" stroke="#1622ff" stroke-width="2.8" fill="none" stroke-linecap="butt"/>
<path d="M840.7 151.6 L855.9 157.7" stroke="#1622ff" stroke-width="2.4" fill="none" stroke-linecap="butt"/>
<path d="M839.5 152.2h2.6v2.6h-2.6zM836.4 151.9h2.6v2.6h-2.6zM837.8 151.7h2.6v2.6h-2.6zM830.2 149.9h2.6v2.6h-2.6zM836.1 151.3h2.6v2.6h-2.6zM837.0 151.5h2.6v2.6h-2.6zM835.3 149.9h2.6v2.6h-2.6zM839.4 152.0h2.6v2.6h-2.6zM835.4 151.0h2.6v2.6h-2.6zM837.7 150.4h2.6v2.6h-2.6zM838.7 150.9h2.6v2.6h-2.6zM829.4 149.5h2.6v2.6h-2.6zM838.6 150.8h2.6v2.6h-2.6zM835.3 150.7h2.6v2.6h-2.6z" fill="#1cf01c"/>
<path d="M858.2 152.2h2.6v2.6h-2.6zM858.8 151.9h2.6v2.6h-2.6zM858.6 149.3h2.6v2.6h-2.6zM857.6 150.1h2.6v2.6h-2.6zM858.8 150.4h2.6v2.6h-2.6zM858.4 148.9h2.6v2.6h-2.6z" fill="#1cf01c"/>
<path d="M864.2 156.3h2.9v2.9h-2.9z" fill="#1cf01c"/>
<path d="M897.6 97.8 L924.0 104.9" stroke="#1a62ff" stroke-width="2.8" fill="none" stroke-dasharray="2.8 1.8"/>
<path d="M921.9 70.9h3.0v3.0h-3.0zM924.9 75.5h3.0v3.0h-3.0zM927.2 80.0h3.0v3.0h-3.0z" fill="#14d2f2"/>
<path d="M924.1 94.2h3.0v3.0h-3.0zM921.5 106.4h3.0v3.0h-3.0zM922.9 94.8h3.0v3.0h-3.0z" fill="#1cf01c"/>
<path d="M902.6 103.8h2.9v2.9h-2.9z" fill="#14e2a4"/>
<path d="M895.9 117.6h2.6v2.6h-2.6zM900.1 119.2h2.6v2.6h-2.6zM900.3 118.5h2.6v2.6h-2.6zM899.1 118.6h2.6v2.6h-2.6zM898.8 117.9h2.6v2.6h-2.6zM901.9 118.7h2.6v2.6h-2.6zM895.5 117.8h2.6v2.6h-2.6zM898.6 118.2h2.6v2.6h-2.6z" fill="#1cf01c"/>
<path d="M883.4 126.6 L898.6 131.7" stroke="#1622ff" stroke-width="2.8" fill="none" stroke-dasharray="2.8 1.0"/>
<path d="M924.6 108.9 L923.4 130.3 L929.1 133.3 L929.5 146.5" stroke="#1696ff" stroke-width="2.8" fill="none" stroke-dasharray="2.8 0.8"/>
<path d="M876.3 147.5 L921.0 169.9" stroke="#1622ff" stroke-width="2.6" fill="none" stroke-dasharray="2.6 0.6"/>
<path d="M921.0 169.9 L924.0 174.0 L921.4 190.0" stroke="#1622ff" stroke-width="2.8" fill="none" stroke-dasharray="2.8 0.6"/>
<path d="M919.5 158.3h2.9v2.9h-2.9zM918.9 164.8h2.9v2.9h-2.9z" fill="#14e2a4"/>
<path d="M905.3 158.7h2.9v2.9h-2.9zM910.4 158.7h2.9v2.9h-2.9zM922.6 159.7h2.9v2.9h-2.9z" fill="#1a62ff"/>
<path d="M879.3 170.9 L903.7 190.0" stroke="#5a14ff" stroke-width="2.8" fill="none" stroke-linecap="butt"/>
<path d="M889.4 172.5h2.9v2.9h-2.9zM892.1 174.5h2.9v2.9h-2.9z" fill="#14d2f2"/>
<path d="M904.3 174.9h2.9v2.9h-2.9zM910.4 175.6h2.9v2.9h-2.9zM917.5 175.6h2.9v2.9h-2.9z" fill="#1a62ff"/>
<path d="M927.1 177.0 L935.2 190.0" stroke="#1a62ff" stroke-width="2.8" fill="none" stroke-dasharray="2.8 0.8"/>
<path d="M993.7 143.4h2.9v2.9h-2.9z" fill="#1a62ff"/>
<path d="M409.2 184.3h2.9v2.9h-2.9zM419.7 189.5h2.9v2.9h-2.9z" fill="#8a10ff"/>
<path d="M429.9 194.5h2.9v2.9h-2.9zM439.2 199.5h2.9v2.9h-2.9z" fill="#5a14ff"/>
<path d="M447.9 204.0h2.9v2.9h-2.9zM455.9 208.2h2.9v2.9h-2.9zM463.7 212.0h2.9v2.9h-2.9zM470.7 215.7h2.9v2.9h-2.9zM477.2 218.8h2.9v2.9h-2.9zM483.8 221.9h2.9v2.9h-2.9z" fill="#1622ff"/>
<path d="M489.7 224.8h2.9v2.9h-2.9zM495.4 227.9h2.9v2.9h-2.9zM500.7 230.7h2.9v2.9h-2.9zM505.9 232.8h2.9v2.9h-2.9zM510.6 235.7h2.9v2.9h-2.9zM515.5 237.8h2.9v2.9h-2.9z" fill="#1a62ff"/>
<path d="M443.7 185.0h2.9v2.9h-2.9zM450.7 189.5h2.9v2.9h-2.9zM458.5 193.7h2.9v2.9h-2.9zM465.9 198.3h2.9v2.9h-2.9z" fill="#8a10ff"/>
<path d="M473.0 202.3h2.9v2.9h-2.9zM479.2 205.8h2.9v2.9h-2.9zM485.9 209.6h2.9v2.9h-2.9z" fill="#5a14ff"/>
<path d="M491.8 212.8h2.9v2.9h-2.9zM497.2 215.9h2.9v2.9h-2.9zM502.5 219.0h2.9v2.9h-2.9zM507.3 221.6h2.9v2.9h-2.9zM512.0 224.4h2.9v2.9h-2.9zM516.9 226.5h2.9v2.9h-2.9z" fill="#1622ff"/>
<path d="M391.6 192.3h2.9v2.9h-2.9zM402.8 197.6h2.9v2.9h-2.9z" fill="#1622ff"/>
<path d="M413.8 202.6h2.9v2.9h-2.9zM423.9 207.8h2.9v2.9h-2.9zM433.8 212.1h2.9v2.9h-2.9zM443.0 216.4h2.9v2.9h-2.9zM451.0 220.2h2.9v2.9h-2.9zM458.9 223.7h2.9v2.9h-2.9z" fill="#1a62ff"/>
<path d="M466.2 226.9h2.9v2.9h-2.9zM478.6 232.8h2.9v2.9h-2.9zM484.8 235.9h2.9v2.9h-2.9zM491.3 238.5h2.9v2.9h-2.9zM496.9 241.0h2.9v2.9h-2.9z" fill="#1696ff"/>
<path d="M502.1 243.0h2.9v2.9h-2.9zM507.0 245.5h2.9v2.9h-2.9zM512.0 247.6h2.9v2.9h-2.9zM516.2 249.7h2.9v2.9h-2.9z" fill="#14d2f2"/>
<path d="M396.9 201.2h2.9v2.9h-2.9zM396.9 216.9h2.9v2.9h-2.9zM408.5 221.2h2.9v2.9h-2.9zM418.0 225.4h2.9v2.9h-2.9zM428.6 229.0h2.9v2.9h-2.9zM437.3 232.8h2.9v2.9h-2.9z" fill="#14d2f2"/>
<path d="M492.3 183.6h2.9v2.9h-2.9zM497.9 187.5h2.9v2.9h-2.9zM502.1 197.6h2.9v2.9h-2.9zM507.0 201.2h2.9v2.9h-2.9zM511.6 204.4h2.9v2.9h-2.9z" fill="#8a10ff"/>
<path d="M515.5 206.8h2.9v2.9h-2.9zM520.0 209.9h2.9v2.9h-2.9zM523.9 212.7h2.9v2.9h-2.9zM527.9 215.2h2.9v2.9h-2.9z" fill="#5a14ff"/>
<path d="M448.6 185.7h2.9v2.9h-2.9zM454.9 190.6h2.9v2.9h-2.9zM450.4 193.1h2.9v2.9h-2.9zM478.9 192.3h2.9v2.9h-2.9zM420.8 244.1h2.9v2.9h-2.9zM431.0 247.2h2.9v2.9h-2.9z" fill="#14e2a4"/>
<path d="M498.6 189.2h2.9v2.9h-2.9zM496.5 193.4h2.9v2.9h-2.9zM511.3 185.7h2.9v2.9h-2.9zM513.4 189.2h2.9v2.9h-2.9zM519.0 192.0h2.9v2.9h-2.9zM523.2 195.5h2.9v2.9h-2.9zM528.2 198.3h2.9v2.9h-2.9z" fill="#c818f0"/>
<path d="M393.0 209.3 L400.1 205.9" stroke="#1cf01c" stroke-width="2.4" fill="none" stroke-linecap="butt"/>
<path d="M405.2 225.6 L407.2 233.7" stroke="#1cf01c" stroke-width="2.2" fill="none" stroke-linecap="butt"/>
<path d="M400.1 235.7 L413.3 238.8" stroke="#1cf01c" stroke-width="2.2" fill="none" stroke-linecap="butt"/>
<path d="M402.0 234.4h2.6v2.6h-2.6zM401.2 233.7h2.6v2.6h-2.6zM409.4 233.5h2.6v2.6h-2.6zM410.2 235.9h2.6v2.6h-2.6zM402.2 238.3h2.6v2.6h-2.6zM405.3 227.6h2.6v2.6h-2.6zM399.5 233.3h2.6v2.6h-2.6zM404.9 231.0h2.6v2.6h-2.6zM401.1 231.5h2.6v2.6h-2.6zM403.3 237.6h2.6v2.6h-2.6zM410.7 236.0h2.6v2.6h-2.6zM410.4 230.8h2.6v2.6h-2.6zM404.0 232.1h2.6v2.6h-2.6zM403.8 232.5h2.6v2.6h-2.6z" fill="#1cf01c"/>
<path d="M393.0 244.9 L441.8 259.5" stroke="#1cf01c" stroke-width="2.8" fill="none" stroke-linecap="butt"/>
<path d="M447.9 247.5 C446.9 249.1 444.1 253.4 441.8 257.1 C439.4 260.7 435.7 265.2 433.6 269.3 C431.5 273.3 429.9 279.4 429.2 281.4" stroke="#f6ea00" stroke-width="2.8" fill="none" stroke-dasharray="2.8 0.6"/>
<path d="M399.1 257.1 L456.4 272.3" stroke="#1cf01c" stroke-width="2.8" fill="none" stroke-dasharray="2.8 6.7"/>
<path d="M421.0 243.4h2.9v2.9h-2.9zM431.2 247.5h2.9v2.9h-2.9z" fill="#14e2a4"/>
<path d="M429.2 281.4 L445.8 285.5 L468.2 290.6" stroke="#f6ea00" stroke-width="2.8" fill="none" stroke-dasharray="2.8 4.7"/>
<path d="M468.2 290.6 L498.7 296.7 L533.2 303.8" stroke="#9ee212" stroke-width="2.8" fill="none" stroke-dasharray="2.8 3.7"/>
<path d="M474.3 232.7 C474.6 235.0 474.3 241.1 476.3 246.9 C478.3 252.7 482.1 261.3 486.5 267.2 C490.9 273.1 500.0 279.9 502.7 282.5" stroke="#5a14ff" stroke-width="2.4" fill="none" stroke-linecap="butt"/>
<path d="M393.0 305.4 L423.5 318.4" stroke="#5a14ff" stroke-width="2.8" fill="none" stroke-dasharray="2.8 3.2"/>
<path d="M393.0 325.1 L407.2 330.0" stroke="#1622ff" stroke-width="2.8" fill="none" stroke-dasharray="2.8 3.2"/>
<path d="M498.7 196.1 C499.5 195.4 501.7 193.0 503.7 192.0 C505.8 191.0 509.7 190.3 510.9 190.0" stroke="#ffa200" stroke-width="2.4" fill="none" stroke-linecap="butt"/>
<path d="M523.1 221.5 L563.7 198.1" stroke="#1cf01c" stroke-width="2.6" fill="none" stroke-linecap="butt"/>
<path d="M525.1 228.6 L561.7 203.2" stroke="#1cf01c" stroke-width="2.6" fill="none" stroke-linecap="butt"/>
<path d="M525.1 234.7 L553.5 216.4" stroke="#1cf01c" stroke-width="2.4" fill="none" stroke-linecap="butt"/>
<path d="M527.1 246.9 L561.7 220.5" stroke="#9ee212" stroke-width="2.4" fill="none" stroke-linecap="butt"/>
<path d="M557.6 210.3 C560.6 212.0 569.7 216.8 575.9 220.5 C582.1 224.2 591.8 230.6 595.0 232.7" stroke="#5a14ff" stroke-width="3.0" fill="none" stroke-linecap="butt"/>
<path d="M567.8 202.2 L584.0 198.1" stroke="#1622ff" stroke-width="3.0" fill="none" stroke-linecap="butt"/>
<path d="M575.9 190.0 C577.2 191.7 580.8 197.1 584.0 200.2 C587.2 203.2 593.2 206.9 595.0 208.3" stroke="#c818f0" stroke-width="2.8" fill="none" stroke-linecap="butt"/>
<path d="M566.2 215.2h2.6v2.6h-2.6zM569.5 204.8h2.6v2.6h-2.6zM576.8 206.5h2.6v2.6h-2.6zM568.4 216.5h2.6v2.6h-2.6zM582.7 220.0h2.6v2.6h-2.6zM575.4 218.7h2.6v2.6h-2.6zM585.8 216.7h2.6v2.6h-2.6zM581.0 212.9h2.6v2.6h-2.6zM580.3 216.0h2.6v2.6h-2.6zM571.8 201.9h2.6v2.6h-2.6zM574.9 208.4h2.6v2.6h-2.6zM567.8 212.4h2.6v2.6h-2.6zM579.9 209.8h2.6v2.6h-2.6zM576.8 210.1h2.6v2.6h-2.6zM568.0 202.3h2.6v2.6h-2.6zM576.3 206.8h2.6v2.6h-2.6zM575.6 205.1h2.6v2.6h-2.6zM573.0 203.2h2.6v2.6h-2.6zM569.3 204.5h2.6v2.6h-2.6zM574.0 217.6h2.6v2.6h-2.6zM581.7 212.5h2.6v2.6h-2.6zM572.2 210.5h2.6v2.6h-2.6zM572.4 207.3h2.6v2.6h-2.6zM564.5 202.9h2.6v2.6h-2.6zM573.9 213.0h2.6v2.6h-2.6zM585.9 210.8h2.6v2.6h-2.6zM570.2 204.7h2.6v2.6h-2.6zM572.3 209.1h2.6v2.6h-2.6zM585.1 215.0h2.6v2.6h-2.6zM569.0 216.2h2.6v2.6h-2.6zM580.9 220.0h2.6v2.6h-2.6zM574.0 214.0h2.6v2.6h-2.6zM584.8 219.3h2.6v2.6h-2.6zM576.8 216.7h2.6v2.6h-2.6zM573.1 211.4h2.6v2.6h-2.6zM564.9 214.4h2.6v2.6h-2.6zM579.6 209.7h2.6v2.6h-2.6zM566.4 203.2h2.6v2.6h-2.6zM576.9 215.5h2.6v2.6h-2.6zM574.7 212.6h2.6v2.6h-2.6z" fill="#5a14ff"/>
<path d="M570.7 198.1h2.6v2.6h-2.6zM574.2 195.9h2.6v2.6h-2.6zM569.3 200.5h2.6v2.6h-2.6zM580.0 202.4h2.6v2.6h-2.6zM578.8 200.6h2.6v2.6h-2.6zM568.2 198.3h2.6v2.6h-2.6zM572.5 202.7h2.6v2.6h-2.6zM571.3 198.4h2.6v2.6h-2.6zM575.3 205.2h2.6v2.6h-2.6zM569.9 200.1h2.6v2.6h-2.6zM575.5 197.8h2.6v2.6h-2.6zM577.4 203.3h2.6v2.6h-2.6zM572.6 197.9h2.6v2.6h-2.6zM577.8 198.2h2.6v2.6h-2.6zM568.0 203.5h2.6v2.6h-2.6zM569.2 205.5h2.6v2.6h-2.6z" fill="#1622ff"/>
<path d="M561.7 236.7 L576.9 252.0" stroke="#1622ff" stroke-width="2.6" fill="none" stroke-linecap="butt"/>
<path d="M546.4 251.0 L554.6 258.1" stroke="#1622ff" stroke-width="2.6" fill="none" stroke-linecap="butt"/>
<path d="M554.1 237.3h2.9v2.9h-2.9zM557.2 234.3h2.9v2.9h-2.9zM560.2 231.2h2.9v2.9h-2.9zM556.2 243.4h2.9v2.9h-2.9zM561.2 240.4h2.9v2.9h-2.9z" fill="#ffa200"/>
<path d="M559.6 226.6 L588.1 210.3" stroke="#ffa200" stroke-width="2.8" fill="none" stroke-dasharray="2.8 0.6"/>
<path d="M559.6 229.6 L595.0 243.2" stroke="#1622ff" stroke-width="2.8" fill="none" stroke-dasharray="2.8 1.4"/>
<path d="M518.8 246.5h2.6v2.6h-2.6zM516.4 252.7h2.6v2.6h-2.6zM528.6 254.8h2.6v2.6h-2.6zM514.8 253.3h2.6v2.6h-2.6zM513.4 254.3h2.6v2.6h-2.6zM527.4 243.4h2.6v2.6h-2.6zM523.4 247.2h2.6v2.6h-2.6zM518.1 249.9h2.6v2.6h-2.6zM516.7 251.2h2.6v2.6h-2.6zM522.3 256.6h2.6v2.6h-2.6zM526.5 246.1h2.6v2.6h-2.6zM514.0 255.5h2.6v2.6h-2.6zM523.5 257.8h2.6v2.6h-2.6zM515.4 252.4h2.6v2.6h-2.6zM523.1 255.9h2.6v2.6h-2.6zM526.6 242.6h2.6v2.6h-2.6zM529.6 253.2h2.6v2.6h-2.6zM517.0 249.5h2.6v2.6h-2.6zM530.5 247.0h2.6v2.6h-2.6zM519.8 256.3h2.6v2.6h-2.6zM516.6 249.8h2.6v2.6h-2.6zM530.0 247.7h2.6v2.6h-2.6zM517.1 253.4h2.6v2.6h-2.6zM517.6 248.6h2.6v2.6h-2.6zM520.5 251.4h2.6v2.6h-2.6zM529.0 250.4h2.6v2.6h-2.6z" fill="#14d2f2"/>
<path d="M514.0 282.1h2.6v2.6h-2.6zM524.3 279.9h2.6v2.6h-2.6zM531.0 271.0h2.6v2.6h-2.6zM529.6 263.7h2.6v2.6h-2.6zM535.9 260.7h2.6v2.6h-2.6zM535.5 271.9h2.6v2.6h-2.6zM534.9 263.1h2.6v2.6h-2.6zM520.5 281.8h2.6v2.6h-2.6zM532.5 267.9h2.6v2.6h-2.6zM520.1 277.0h2.6v2.6h-2.6zM515.0 279.2h2.6v2.6h-2.6zM525.2 283.5h2.6v2.6h-2.6zM519.0 287.1h2.6v2.6h-2.6zM524.8 278.2h2.6v2.6h-2.6zM522.6 285.0h2.6v2.6h-2.6zM534.1 269.9h2.6v2.6h-2.6zM525.0 279.0h2.6v2.6h-2.6zM527.9 277.8h2.6v2.6h-2.6zM515.7 282.8h2.6v2.6h-2.6zM522.0 271.3h2.6v2.6h-2.6zM537.9 266.6h2.6v2.6h-2.6zM512.5 288.4h2.6v2.6h-2.6zM515.9 289.1h2.6v2.6h-2.6zM516.6 286.4h2.6v2.6h-2.6zM527.8 265.3h2.6v2.6h-2.6zM521.3 276.8h2.6v2.6h-2.6zM533.4 267.9h2.6v2.6h-2.6zM537.2 267.1h2.6v2.6h-2.6zM529.9 266.8h2.6v2.6h-2.6zM524.6 282.3h2.6v2.6h-2.6zM524.2 283.3h2.6v2.6h-2.6zM533.0 272.2h2.6v2.6h-2.6zM517.2 283.4h2.6v2.6h-2.6zM527.0 271.5h2.6v2.6h-2.6zM526.2 283.0h2.6v2.6h-2.6zM531.1 263.2h2.6v2.6h-2.6zM529.7 274.4h2.6v2.6h-2.6zM524.6 265.1h2.6v2.6h-2.6zM528.9 268.9h2.6v2.6h-2.6zM529.5 271.6h2.6v2.6h-2.6zM531.8 273.8h2.6v2.6h-2.6zM522.8 284.6h2.6v2.6h-2.6zM523.3 269.8h2.6v2.6h-2.6zM523.0 268.7h2.6v2.6h-2.6zM529.8 277.0h2.6v2.6h-2.6zM536.3 260.1h2.6v2.6h-2.6zM516.9 275.4h2.6v2.6h-2.6zM533.7 261.7h2.6v2.6h-2.6zM528.1 271.2h2.6v2.6h-2.6zM536.1 266.5h2.6v2.6h-2.6zM519.7 271.7h2.6v2.6h-2.6zM534.7 263.5h2.6v2.6h-2.6zM536.7 269.5h2.6v2.6h-2.6zM530.5 278.7h2.6v2.6h-2.6zM515.8 288.8h2.6v2.6h-2.6zM513.7 286.0h2.6v2.6h-2.6zM520.9 287.9h2.6v2.6h-2.6zM521.1 286.2h2.6v2.6h-2.6zM523.4 269.0h2.6v2.6h-2.6zM520.5 287.8h2.6v2.6h-2.6zM533.1 267.6h2.6v2.6h-2.6zM525.9 276.7h2.6v2.6h-2.6zM537.1 266.2h2.6v2.6h-2.6zM515.0 278.1h2.6v2.6h-2.6zM535.6 260.8h2.6v2.6h-2.6zM522.0 277.6h2.6v2.6h-2.6zM524.1 280.7h2.6v2.6h-2.6zM526.0 271.9h2.6v2.6h-2.6zM525.0 271.4h2.6v2.6h-2.6zM527.0 274.1h2.6v2.6h-2.6zM535.4 259.8h2.6v2.6h-2.6zM528.3 277.2h2.6v2.6h-2.6zM515.4 280.3h2.6v2.6h-2.6zM529.6 276.8h2.6v2.6h-2.6zM530.1 277.9h2.6v2.6h-2.6z" fill="#1cf01c"/>
<path d="M529.7 255.9h2.6v2.6h-2.6zM530.1 255.2h2.6v2.6h-2.6zM527.7 265.4h2.6v2.6h-2.6zM525.5 267.2h2.6v2.6h-2.6zM518.0 263.9h2.6v2.6h-2.6zM527.5 265.3h2.6v2.6h-2.6zM524.8 262.8h2.6v2.6h-2.6zM517.7 263.6h2.6v2.6h-2.6zM519.9 258.4h2.6v2.6h-2.6zM531.3 255.4h2.6v2.6h-2.6zM523.1 268.7h2.6v2.6h-2.6zM520.1 270.3h2.6v2.6h-2.6zM522.4 269.9h2.6v2.6h-2.6zM520.1 258.9h2.6v2.6h-2.6zM530.0 258.5h2.6v2.6h-2.6zM525.3 263.3h2.6v2.6h-2.6zM517.8 262.1h2.6v2.6h-2.6zM526.0 254.1h2.6v2.6h-2.6z" fill="#14e2a4"/>
<path d="M514.9 271.3 L533.2 268.2" stroke="#1cf01c" stroke-width="2.2" fill="none" stroke-linecap="butt"/>
<path d="M517.0 279.4 L535.2 285.5" stroke="#1cf01c" stroke-width="2.2" fill="none" stroke-linecap="butt"/>
<path d="M523.1 263.2 L539.3 259.1" stroke="#1cf01c" stroke-width="2.2" fill="none" stroke-linecap="butt"/>
<path d="M527.1 287.5 L523.1 295.7" stroke="#1cf01c" stroke-width="2.2" fill="none" stroke-linecap="butt"/>
<path d="M544.4 244.5 C540.8 247.2 528.3 255.6 523.1 261.1 C517.8 266.6 515.4 271.6 512.9 277.4 C510.4 283.1 508.8 289.9 507.8 295.7 C506.8 301.4 507.0 309.2 506.8 311.9" stroke="#ffc400" stroke-width="2.4" fill="none" stroke-linecap="butt"/>
<path d="M506.8 311.9 L519.0 314.4 L533.2 318.0 L528.1 324.1" stroke="#f6ea00" stroke-width="2.8" fill="none" stroke-dasharray="2.8 1.8"/>
<path d="M533.2 299.7 L533.2 307.9" stroke="#9ee212" stroke-width="2.8" fill="none" stroke-dasharray="2.8 1.8"/>
<path d="M595.0 243.2 C591.8 245.5 581.4 251.4 575.9 257.1 C570.3 262.7 565.1 270.3 561.7 277.4 C558.3 284.5 556.4 292.6 555.6 299.7 C554.7 306.8 555.7 314.0 556.6 320.1 C557.4 326.2 559.1 331.9 560.6 336.3 C562.2 340.7 563.4 342.6 565.7 346.3 C568.1 350.0 572.5 355.6 574.9 358.5 C577.2 361.3 579.1 362.7 580.0 363.5" stroke="#ffbc00" stroke-width="2.5" fill="none" stroke-linecap="butt"/>
<path d="M595.0 271.3 C593.5 274.0 588.0 282.1 586.1 287.5 C584.1 293.0 583.2 298.4 583.0 303.8 C582.8 309.2 584.0 315.5 585.0 320.1 C586.1 324.6 587.4 328.3 589.1 331.2 C590.8 334.2 592.3 334.7 595.0 337.7 C597.7 340.7 603.5 347.4 605.2 349.3" stroke="#ffb200" stroke-width="2.5" fill="none" stroke-linecap="butt"/>
<path d="M527.7 202.8h2.9v2.9h-2.9zM531.8 200.7h2.9v2.9h-2.9zM535.8 199.7h2.9v2.9h-2.9zM544.0 192.6h2.9v2.9h-2.9zM543.6 195.7h2.9v2.9h-2.9zM542.9 198.7h2.9v2.9h-2.9zM551.1 189.6h2.9v2.9h-2.9z" fill="#1cf01c"/>
<path d="M694.6 221.5 L694.6 260.1" stroke="#1622ff" stroke-width="1.8" fill="none" stroke-linecap="butt"/>
<path d="M694.6 260.1 L737.2 258.1" stroke="#e41212" stroke-width="1.8" fill="none" stroke-linecap="butt"/>
<defs><linearGradient id="gc" gradientUnits="userSpaceOnUse" x1="712" y1="0" x2="762" y2="0"><stop offset="0" stop-color="#8a10ff"/><stop offset="1" stop-color="#3818ff"/></linearGradient></defs>
<path d="M595.0 209.3 C597.7 211.5 604.5 218.4 611.3 222.5 C618.1 226.6 624.8 230.8 635.6 233.7 C646.4 236.6 662.8 239.1 676.3 239.8 C689.8 240.5 704.0 239.3 716.9 237.8 C729.8 236.3 744.5 233.4 753.9 230.6 C763.2 227.8 768.3 223.9 773.0 221.0 C777.7 218.1 780.1 216.4 782.3 213.4 C784.5 210.4 785.7 206.2 786.2 202.9 C786.7 199.6 786.6 196.9 785.5 193.8 C784.4 190.8 782.5 187.7 779.6 184.6 C776.7 181.5 772.9 178.5 767.9 175.5 C762.9 172.5 755.4 169.1 749.6 166.4 C743.8 163.7 736.0 160.4 733.3 159.2" stroke="url(#gc)" stroke-width="2.8" fill="none"/>
<path d="M733.9 153.9 C737.6 155.4 749.2 159.5 756.1 162.4 C763.1 165.4 769.8 168.3 775.7 171.6 C781.6 174.8 787.2 178.6 791.4 182.0 C795.7 185.5 798.9 189.0 801.2 192.5 C803.5 196.0 804.6 199.5 805.1 202.9 C805.7 206.4 805.1 209.7 804.5 213.4 C803.9 217.1 802.8 221.8 801.6 225.0 C800.4 228.2 797.8 231.4 797.0 232.7" stroke="#2a1aff" stroke-width="2.8" fill="none" stroke-linecap="butt"/>
<path d="M741.8 152.0 C745.2 153.3 755.9 157.0 762.7 159.8 C769.4 162.7 776.4 165.7 782.3 169.0 C788.1 172.2 793.6 175.7 797.9 179.4 C802.3 183.1 806.0 187.3 808.4 191.2 C810.8 195.1 811.8 199.0 812.3 202.9 C812.9 206.9 812.3 211.0 811.7 214.7 C811.0 218.4 809.5 222.3 808.4 225.0 C807.3 227.7 807.0 228.7 805.1 231.0 C803.2 233.3 798.4 237.5 797.0 238.7" stroke="#2a1aff" stroke-width="2.8" fill="none" stroke-linecap="butt"/>
<path d="M749.6 152.0 C752.9 152.9 762.7 155.0 769.2 157.2 C775.7 159.4 782.3 161.8 788.8 165.0 C795.3 168.3 802.9 172.7 808.4 176.8 C813.8 180.9 818.4 185.5 821.5 189.9 C824.5 194.2 825.7 199.0 826.7 202.9 C827.7 206.9 827.8 209.7 827.3 213.4 C826.9 217.1 825.1 222.1 824.1 225.0 C823.1 228.0 824.1 227.7 821.3 231.0 C818.5 234.3 811.3 241.5 807.2 244.9 C803.2 248.2 798.7 250.0 797.0 251.0" stroke="#2a1aff" stroke-width="2.8" fill="none" stroke-linecap="butt"/>
<path d="M734.1 148.2h3.0v3.0h-3.0zM746.4 149.9h3.0v3.0h-3.0zM751.1 153.7h3.0v3.0h-3.0zM743.3 155.3h3.0v3.0h-3.0zM746.2 150.2h3.0v3.0h-3.0zM750.4 149.9h3.0v3.0h-3.0zM753.6 154.8h3.0v3.0h-3.0zM738.8 152.5h3.0v3.0h-3.0zM742.7 146.5h3.0v3.0h-3.0zM750.9 149.9h3.0v3.0h-3.0zM744.2 152.9h3.0v3.0h-3.0zM745.7 150.5h3.0v3.0h-3.0zM741.8 155.0h3.0v3.0h-3.0zM735.6 144.9h3.0v3.0h-3.0zM734.5 146.1h3.0v3.0h-3.0zM736.4 149.5h3.0v3.0h-3.0zM745.9 147.8h3.0v3.0h-3.0zM745.7 151.1h3.0v3.0h-3.0zM738.3 144.8h3.0v3.0h-3.0zM733.3 149.2h3.0v3.0h-3.0zM750.2 156.2h3.0v3.0h-3.0zM741.5 147.2h3.0v3.0h-3.0zM744.8 149.2h3.0v3.0h-3.0zM746.3 150.9h3.0v3.0h-3.0zM751.9 156.1h3.0v3.0h-3.0zM735.8 153.3h3.0v3.0h-3.0zM732.5 147.7h3.0v3.0h-3.0zM741.7 146.9h3.0v3.0h-3.0zM731.7 147.7h3.0v3.0h-3.0zM735.7 149.6h3.0v3.0h-3.0z" fill="#5a14ff"/>
<path d="M595.0 228.6 C600.1 231.3 613.6 240.5 625.5 244.9 C637.3 249.3 653.6 253.3 666.1 255.0 C678.7 256.8 694.9 255.4 700.7 255.4" stroke="#1622ff" stroke-width="2.8" fill="none" stroke-linecap="butt"/>
<path d="M709.8 255.0 C716.1 254.4 736.7 253.0 747.4 251.0 C758.1 248.9 765.6 246.1 773.8 242.8 C782.1 239.6 793.1 233.5 797.0 231.7" stroke="#8a10ff" stroke-width="2.8" fill="none" stroke-linecap="butt"/>
<path d="M595.0 235.7 C600.1 238.6 611.9 248.5 625.5 253.0 C639.0 257.5 661.7 261.1 676.3 262.7 C690.8 264.4 706.8 263.1 712.9 263.2" stroke="#1622ff" stroke-width="2.8" fill="none" stroke-linecap="butt"/>
<path d="M719.0 262.1 C725.4 261.1 747.7 257.9 757.6 256.0 C767.4 254.2 771.3 253.7 777.9 251.0 C784.5 248.2 793.8 241.3 797.0 239.4" stroke="#8a10ff" stroke-width="2.8" fill="none" stroke-linecap="butt"/>
<path d="M595.0 244.9 C601.8 247.6 621.4 257.0 635.6 261.1 C649.9 265.3 666.8 268.1 680.3 269.7 C693.9 271.2 705.7 270.7 716.9 270.3 C728.1 269.9 742.3 267.7 747.4 267.2" stroke="#1622ff" stroke-width="2.8" fill="none" stroke-linecap="butt"/>
<path d="M759.6 266.2 L797.0 257.1" stroke="#8a10ff" stroke-width="2.8" fill="none" stroke-dasharray="2.8 0.6"/>
<path d="M603.1 259.1 C610.2 261.8 630.2 271.2 645.8 275.3 C661.4 279.5 684.1 282.3 696.6 283.9 C709.1 285.5 716.9 284.7 721.0 284.9" stroke="#1a58ff" stroke-width="3.0" fill="none" stroke-linecap="butt"/>
<path d="M721.0 284.9 C723.7 284.9 724.6 285.5 737.2 285.1 C749.9 284.7 787.0 282.9 797.0 282.5" stroke="#1622ff" stroke-width="2.8" fill="none" stroke-dasharray="2.8 0.8"/>
<path d="M605.2 271.3 C611.9 273.7 630.6 281.6 645.8 285.5 C661.0 289.4 683.4 292.8 696.6 294.7 C709.8 296.6 720.3 296.5 725.1 296.9" stroke="#1694ff" stroke-width="3.0" fill="none" stroke-linecap="butt"/>
<path d="M725.1 296.9 C727.1 297.0 725.3 297.3 737.2 297.3 C749.2 297.3 787.0 296.8 797.0 296.7" stroke="#1a62ff" stroke-width="2.8" fill="none" stroke-dasharray="2.8 0.8"/>
<path d="M605.2 279.4 C613.6 282.5 637.3 293.1 656.0 297.7 C674.6 302.3 706.8 305.3 716.9 306.8" stroke="#12dcf6" stroke-width="3.0" fill="none" stroke-linecap="butt"/>
<path d="M716.9 306.8 C723.7 307.4 744.2 309.2 757.6 309.9 C770.9 310.6 790.4 310.7 797.0 310.9" stroke="#1696ff" stroke-width="2.8" fill="none" stroke-dasharray="2.8 0.8"/>
<path d="M605.2 287.5 C613.6 290.6 637.3 300.9 656.0 305.8 C674.6 310.7 704.7 314.9 716.9 317.0 C729.1 319.1 727.1 318.4 729.1 318.6" stroke="#12eeb8" stroke-width="3.0" fill="none" stroke-linecap="butt"/>
<path d="M729.1 318.6 C733.9 319.0 746.3 320.0 757.6 321.1 C768.9 322.2 790.4 324.5 797.0 325.1" stroke="#14d2f2" stroke-width="2.8" fill="none" stroke-dasharray="2.8 1.4"/>
<path d="M615.3 289.6 C622.1 291.9 640.7 299.2 656.0 303.8 C671.2 308.4 695.3 314.3 706.8 317.0 C718.3 319.7 722.0 319.5 725.1 320.1" stroke="#22f078" stroke-width="2.6" fill="none" stroke-linecap="butt"/>
<path d="M595.0 240.8 C598.4 239.1 605.2 234.4 615.3 230.6 C625.5 226.9 643.1 221.4 656.0 218.4 C668.8 215.5 686.4 213.7 692.5 212.8" stroke="#ffa200" stroke-width="2.6" fill="none" stroke-linecap="butt"/>
<path d="M692.5 212.8 L716.9 212.8" stroke="#ff5a12" stroke-width="2.4" fill="none" stroke-linecap="butt"/>
<path d="M715.5 215.0h2.9v2.9h-2.9zM718.5 217.0h2.9v2.9h-2.9zM721.6 219.0h2.9v2.9h-2.9zM727.7 212.5h2.9v2.9h-2.9zM733.8 213.3h2.9v2.9h-2.9zM730.7 218.6h2.9v2.9h-2.9zM734.8 219.4h2.9v2.9h-2.9zM738.8 220.0h2.9v2.9h-2.9z" fill="#ff5a12"/>
<path d="M595.0 273.3 C597.0 270.9 600.4 264.0 607.2 259.1 C614.0 254.2 625.8 247.9 635.6 243.9 C645.5 239.8 656.0 236.7 666.1 234.7 C676.3 232.7 685.8 231.8 696.6 231.7 C707.4 231.5 725.4 233.4 731.2 233.7" stroke="#ffa200" stroke-width="3.0" fill="none" stroke-linecap="butt"/>
<path d="M684.4 190.0 C681.4 191.9 672.6 197.3 666.1 201.2 C659.7 205.1 649.2 211.3 645.8 213.4" stroke="#f6ea00" stroke-width="2.6" fill="none" stroke-linecap="butt"/>
<path d="M645.8 213.4 L628.5 216.4" stroke="#9ee212" stroke-width="2.4" fill="none" stroke-linecap="butt"/>
<path d="M672.2 190.0 L649.9 203.2" stroke="#9ee212" stroke-width="2.4" fill="none" stroke-linecap="butt"/>
<path d="M649.9 203.2 L637.7 202.6" stroke="#1cf01c" stroke-width="2.4" fill="none" stroke-linecap="butt"/>
<path d="M643.8 219.5 L631.6 225.6" stroke="#f6ea00" stroke-width="2.8" fill="none" stroke-dasharray="2.8 0.6"/>
<path d="M643.8 223.5 L664.1 216.4" stroke="#ffa200" stroke-width="2.8" fill="none" stroke-dasharray="2.8 0.6"/>
<path d="M643.6 190.7h2.6v2.6h-2.6zM649.2 189.5h2.6v2.6h-2.6zM640.0 189.8h2.6v2.6h-2.6zM648.7 190.9h2.6v2.6h-2.6zM648.0 190.2h2.6v2.6h-2.6zM647.9 190.2h2.6v2.6h-2.6zM638.5 189.4h2.6v2.6h-2.6zM640.5 190.9h2.6v2.6h-2.6zM647.1 191.2h2.6v2.6h-2.6zM647.4 189.8h2.6v2.6h-2.6zM644.5 190.2h2.6v2.6h-2.6zM648.8 190.4h2.6v2.6h-2.6z" fill="#1cf01c"/>
<path d="M635.2 204.8h2.9v2.9h-2.9zM637.2 204.4h2.9v2.9h-2.9z" fill="#1cf01c"/>
<path d="M721.0 200.2 L731.2 201.2" stroke="#9ee212" stroke-width="2.4" fill="none" stroke-linecap="butt"/>
<path d="M737.2 198.1 L749.4 201.2" stroke="#9ee212" stroke-width="2.4" fill="none" stroke-linecap="butt"/>
<path d="M722.0 209.3 L749.4 210.3" stroke="#f6ea00" stroke-width="2.6" fill="none" stroke-linecap="butt"/>
<path d="M763.2 215.0h2.9v2.9h-2.9zM767.3 216.0h2.9v2.9h-2.9zM771.4 217.0h2.9v2.9h-2.9z" fill="#f6ea00"/>
<path d="M765.6 205.2h2.6v2.6h-2.6zM765.5 204.4h2.6v2.6h-2.6zM771.5 204.6h2.6v2.6h-2.6zM773.1 204.6h2.6v2.6h-2.6zM765.3 205.8h2.6v2.6h-2.6zM770.1 205.3h2.6v2.6h-2.6zM768.1 205.6h2.6v2.6h-2.6zM770.9 205.7h2.6v2.6h-2.6z" fill="#9ee212"/>
<path d="M766.3 192.5h2.6v2.6h-2.6zM768.7 191.1h2.6v2.6h-2.6zM762.2 192.1h2.6v2.6h-2.6zM764.6 190.6h2.6v2.6h-2.6zM771.0 192.2h2.6v2.6h-2.6zM771.0 192.5h2.6v2.6h-2.6zM759.5 192.0h2.6v2.6h-2.6zM764.9 192.8h2.6v2.6h-2.6zM760.3 190.8h2.6v2.6h-2.6zM773.8 192.8h2.6v2.6h-2.6zM769.9 192.8h2.6v2.6h-2.6zM769.9 191.1h2.6v2.6h-2.6z" fill="#1cf01c"/>
<path d="M791.7 196.7h2.9v2.9h-2.9zM793.7 197.1h2.9v2.9h-2.9z" fill="#9ee212"/>
<path d="M750.9 235.0h2.6v2.6h-2.6zM741.0 237.1h2.6v2.6h-2.6zM736.8 244.3h2.6v2.6h-2.6zM743.1 234.9h2.6v2.6h-2.6zM750.7 244.3h2.6v2.6h-2.6zM747.4 246.3h2.6v2.6h-2.6zM736.4 234.6h2.6v2.6h-2.6zM738.6 247.0h2.6v2.6h-2.6zM738.0 244.5h2.6v2.6h-2.6zM747.2 233.6h2.6v2.6h-2.6zM752.4 234.6h2.6v2.6h-2.6zM735.0 236.3h2.6v2.6h-2.6zM739.2 248.1h2.6v2.6h-2.6zM737.9 237.9h2.6v2.6h-2.6zM736.4 247.8h2.6v2.6h-2.6zM743.0 231.5h2.6v2.6h-2.6zM746.4 242.1h2.6v2.6h-2.6zM734.9 240.9h2.6v2.6h-2.6zM742.8 249.4h2.6v2.6h-2.6zM747.0 237.8h2.6v2.6h-2.6zM742.7 237.0h2.6v2.6h-2.6zM741.2 232.1h2.6v2.6h-2.6zM749.7 243.7h2.6v2.6h-2.6zM736.3 249.4h2.6v2.6h-2.6zM739.2 237.4h2.6v2.6h-2.6zM740.4 247.3h2.6v2.6h-2.6zM745.4 246.3h2.6v2.6h-2.6zM742.7 234.9h2.6v2.6h-2.6zM733.1 246.6h2.6v2.6h-2.6zM742.7 248.0h2.6v2.6h-2.6zM738.4 236.3h2.6v2.6h-2.6zM746.6 244.7h2.6v2.6h-2.6zM737.4 236.6h2.6v2.6h-2.6zM752.6 236.9h2.6v2.6h-2.6zM740.4 233.0h2.6v2.6h-2.6zM742.2 250.9h2.6v2.6h-2.6zM741.6 229.0h2.6v2.6h-2.6zM741.0 234.1h2.6v2.6h-2.6zM747.6 232.0h2.6v2.6h-2.6zM744.1 231.2h2.6v2.6h-2.6zM737.9 234.4h2.6v2.6h-2.6zM747.7 240.7h2.6v2.6h-2.6zM736.3 241.6h2.6v2.6h-2.6zM740.2 229.9h2.6v2.6h-2.6zM747.0 227.7h2.6v2.6h-2.6zM737.8 247.2h2.6v2.6h-2.6zM746.2 242.1h2.6v2.6h-2.6zM745.7 240.6h2.6v2.6h-2.6zM735.9 240.3h2.6v2.6h-2.6zM738.5 245.9h2.6v2.6h-2.6zM750.6 242.0h2.6v2.6h-2.6zM741.2 247.5h2.6v2.6h-2.6zM745.1 232.9h2.6v2.6h-2.6zM742.0 252.0h2.6v2.6h-2.6zM745.1 247.8h2.6v2.6h-2.6zM746.6 247.9h2.6v2.6h-2.6zM746.0 240.5h2.6v2.6h-2.6zM738.4 242.3h2.6v2.6h-2.6zM737.4 235.3h2.6v2.6h-2.6zM745.1 248.2h2.6v2.6h-2.6zM748.3 235.1h2.6v2.6h-2.6zM742.4 238.8h2.6v2.6h-2.6zM746.2 239.2h2.6v2.6h-2.6zM740.6 252.9h2.6v2.6h-2.6zM735.9 242.0h2.6v2.6h-2.6zM749.0 239.9h2.6v2.6h-2.6zM737.0 252.6h2.6v2.6h-2.6zM734.9 238.0h2.6v2.6h-2.6zM734.0 245.0h2.6v2.6h-2.6zM750.1 244.5h2.6v2.6h-2.6zM735.6 239.3h2.6v2.6h-2.6zM741.0 246.4h2.6v2.6h-2.6zM741.5 244.2h2.6v2.6h-2.6zM748.2 243.7h2.6v2.6h-2.6zM736.0 251.3h2.6v2.6h-2.6zM736.0 242.9h2.6v2.6h-2.6zM738.0 246.4h2.6v2.6h-2.6zM746.2 228.0h2.6v2.6h-2.6zM740.6 236.2h2.6v2.6h-2.6zM736.1 234.6h2.6v2.6h-2.6zM739.3 245.0h2.6v2.6h-2.6zM743.5 233.3h2.6v2.6h-2.6zM735.5 244.5h2.6v2.6h-2.6zM750.0 244.7h2.6v2.6h-2.6zM734.7 246.0h2.6v2.6h-2.6zM744.8 232.3h2.6v2.6h-2.6zM733.5 244.7h2.6v2.6h-2.6zM746.5 246.4h2.6v2.6h-2.6zM741.8 241.9h2.6v2.6h-2.6zM738.9 242.9h2.6v2.6h-2.6zM744.4 251.2h2.6v2.6h-2.6zM745.1 235.0h2.6v2.6h-2.6zM748.5 231.3h2.6v2.6h-2.6zM750.4 239.5h2.6v2.6h-2.6zM751.7 237.4h2.6v2.6h-2.6zM744.1 233.2h2.6v2.6h-2.6zM745.7 231.9h2.6v2.6h-2.6zM742.6 232.2h2.6v2.6h-2.6zM740.0 238.4h2.6v2.6h-2.6zM740.2 243.5h2.6v2.6h-2.6zM747.4 238.3h2.6v2.6h-2.6zM746.2 251.0h2.6v2.6h-2.6zM733.0 246.1h2.6v2.6h-2.6zM748.7 235.4h2.6v2.6h-2.6zM735.3 245.5h2.6v2.6h-2.6zM744.8 230.4h2.6v2.6h-2.6zM746.1 251.2h2.6v2.6h-2.6zM741.4 248.6h2.6v2.6h-2.6zM741.0 251.9h2.6v2.6h-2.6zM743.6 251.5h2.6v2.6h-2.6zM735.7 243.1h2.6v2.6h-2.6zM740.6 247.0h2.6v2.6h-2.6zM737.3 249.8h2.6v2.6h-2.6zM746.9 234.9h2.6v2.6h-2.6zM743.1 229.2h2.6v2.6h-2.6zM748.4 229.2h2.6v2.6h-2.6zM746.9 231.1h2.6v2.6h-2.6zM742.9 240.4h2.6v2.6h-2.6zM739.2 250.1h2.6v2.6h-2.6zM741.8 241.9h2.6v2.6h-2.6z" fill="#1cf01c"/>
<path d="M740.0 276.9h2.6v2.6h-2.6zM734.7 268.3h2.6v2.6h-2.6zM739.5 272.8h2.6v2.6h-2.6zM728.3 272.2h2.6v2.6h-2.6zM740.3 278.8h2.6v2.6h-2.6zM737.2 269.7h2.6v2.6h-2.6zM741.0 272.5h2.6v2.6h-2.6zM734.0 277.3h2.6v2.6h-2.6zM734.5 269.5h2.6v2.6h-2.6zM737.4 275.5h2.6v2.6h-2.6zM731.7 268.7h2.6v2.6h-2.6zM735.5 271.1h2.6v2.6h-2.6zM742.9 265.8h2.6v2.6h-2.6zM743.0 268.0h2.6v2.6h-2.6zM737.0 265.3h2.6v2.6h-2.6zM737.1 279.6h2.6v2.6h-2.6zM739.8 275.9h2.6v2.6h-2.6zM733.9 266.3h2.6v2.6h-2.6zM733.3 271.7h2.6v2.6h-2.6zM739.4 275.8h2.6v2.6h-2.6zM744.0 270.9h2.6v2.6h-2.6zM728.7 265.9h2.6v2.6h-2.6zM744.7 272.2h2.6v2.6h-2.6zM739.9 275.9h2.6v2.6h-2.6zM744.5 272.3h2.6v2.6h-2.6zM739.1 272.6h2.6v2.6h-2.6zM740.6 271.9h2.6v2.6h-2.6zM740.3 264.1h2.6v2.6h-2.6zM740.0 269.1h2.6v2.6h-2.6zM741.8 261.9h2.6v2.6h-2.6zM742.0 278.4h2.6v2.6h-2.6zM739.8 267.3h2.6v2.6h-2.6zM742.9 275.8h2.6v2.6h-2.6zM738.1 265.1h2.6v2.6h-2.6zM733.3 268.4h2.6v2.6h-2.6zM733.6 268.6h2.6v2.6h-2.6zM739.6 278.8h2.6v2.6h-2.6zM728.8 271.4h2.6v2.6h-2.6zM742.6 271.5h2.6v2.6h-2.6zM744.6 268.9h2.6v2.6h-2.6zM728.1 267.7h2.6v2.6h-2.6zM738.6 278.9h2.6v2.6h-2.6zM745.8 269.5h2.6v2.6h-2.6zM735.4 261.9h2.6v2.6h-2.6zM739.6 264.1h2.6v2.6h-2.6z" fill="#1cf01c"/>
<path d="M716.9 239.8 L723.0 244.9" stroke="#1cf01c" stroke-width="2.4" fill="none" stroke-linecap="butt"/>
<path d="M710.8 248.9 L721.0 251.0" stroke="#1cf01c" stroke-width="2.4" fill="none" stroke-linecap="butt"/>
<path d="M729.1 242.8 L737.2 245.9" stroke="#1cf01c" stroke-width="2.4" fill="none" stroke-linecap="butt"/>
<path d="M753.3 288.1h2.6v2.6h-2.6zM753.4 287.9h2.6v2.6h-2.6zM751.9 291.4h2.6v2.6h-2.6zM753.6 287.3h2.6v2.6h-2.6zM752.0 290.5h2.6v2.6h-2.6z" fill="#9ee212"/>
<path d="M784.0 288.4h2.6v2.6h-2.6zM783.6 286.9h2.6v2.6h-2.6zM783.3 287.9h2.6v2.6h-2.6zM784.1 282.0h2.6v2.6h-2.6zM783.8 285.8h2.6v2.6h-2.6zM784.0 286.5h2.6v2.6h-2.6zM783.2 287.4h2.6v2.6h-2.6z" fill="#1cf01c"/>
<path d="M770.3 307.5h2.6v2.6h-2.6zM773.0 302.4h2.6v2.6h-2.6zM771.6 309.1h2.6v2.6h-2.6zM771.2 301.4h2.6v2.6h-2.6zM777.0 306.8h2.6v2.6h-2.6zM769.5 307.3h2.6v2.6h-2.6zM771.8 301.3h2.6v2.6h-2.6zM773.0 310.0h2.6v2.6h-2.6zM770.8 307.9h2.6v2.6h-2.6zM775.8 308.6h2.6v2.6h-2.6zM775.0 299.1h2.6v2.6h-2.6zM770.9 306.3h2.6v2.6h-2.6zM779.2 306.6h2.6v2.6h-2.6zM779.0 306.4h2.6v2.6h-2.6zM771.1 301.1h2.6v2.6h-2.6zM779.2 305.3h2.6v2.6h-2.6zM777.3 308.1h2.6v2.6h-2.6zM766.2 300.7h2.6v2.6h-2.6zM774.4 307.8h2.6v2.6h-2.6zM768.4 310.3h2.6v2.6h-2.6zM774.4 305.8h2.6v2.6h-2.6zM769.0 301.2h2.6v2.6h-2.6zM769.3 309.8h2.6v2.6h-2.6zM775.9 301.5h2.6v2.6h-2.6zM774.1 298.8h2.6v2.6h-2.6zM775.5 308.8h2.6v2.6h-2.6zM777.8 301.4h2.6v2.6h-2.6zM771.7 305.9h2.6v2.6h-2.6zM764.4 303.4h2.6v2.6h-2.6zM767.8 309.8h2.6v2.6h-2.6z" fill="#9ee212"/>
<path d="M595.0 198.1 L603.1 192.0" stroke="#8a10ff" stroke-width="2.6" fill="none" stroke-linecap="butt"/>
<path d="M749.4 248.9 L775.9 241.8" stroke="#8a10ff" stroke-width="2.8" fill="none" stroke-dasharray="2.8 0.6"/>
<path d="M615.3 292.6 C620.4 293.9 637.7 298.0 645.8 300.3 C653.9 302.6 661.0 305.4 664.1 306.4" stroke="#14e2a4" stroke-width="2.2" fill="none" stroke-linecap="butt"/>
<path d="M616.1 297.1 C621.1 298.4 637.9 302.5 645.8 304.8 C653.7 307.1 660.7 309.9 663.7 310.9" stroke="#1cf01c" stroke-width="2.2" fill="none" stroke-linecap="butt"/>
<path d="M616.9 301.6 C621.8 302.8 638.1 307.0 645.8 309.3 C653.5 311.6 660.4 314.4 663.3 315.4" stroke="#1cf01c" stroke-width="2.2" fill="none" stroke-linecap="butt"/>
<path d="M617.8 306.0 C622.4 307.3 638.3 311.5 645.8 313.8 C653.3 316.1 660.0 318.8 662.9 319.9" stroke="#1cf01c" stroke-width="2.2" fill="none" stroke-linecap="butt"/>
<path d="M618.6 310.5 C623.1 311.8 638.5 315.9 645.8 318.2 C653.1 320.5 659.7 323.3 662.5 324.3" stroke="#1cf01c" stroke-width="2.2" fill="none" stroke-linecap="butt"/>
<path d="M619.4 315.0 C623.8 316.3 638.7 320.4 645.8 322.7 C652.9 325.0 659.4 327.8 662.1 328.8" stroke="#1cf01c" stroke-width="2.2" fill="none" stroke-linecap="butt"/>
<path d="M620.2 319.4 C624.5 320.7 638.9 324.9 645.8 327.2 C652.7 329.5 659.0 332.2 661.7 333.3" stroke="#9ee212" stroke-width="2.2" fill="none" stroke-linecap="butt"/>
<path d="M621.0 323.9 C625.1 325.2 639.1 329.3 645.8 331.6 C652.5 333.9 658.7 336.7 661.2 337.7" stroke="#9ee212" stroke-width="2.2" fill="none" stroke-linecap="butt"/>
<path d="M621.8 328.4 C625.8 329.7 639.3 333.8 645.8 336.1 C652.3 338.4 658.3 341.2 660.8 342.2" stroke="#9ee212" stroke-width="2.2" fill="none" stroke-linecap="butt"/>
<path d="M669.2 308.9 C672.7 310.1 683.9 313.9 690.5 316.0 C697.1 318.1 705.7 320.6 708.8 321.5" stroke="#1cf01c" stroke-width="2.2" fill="none" stroke-linecap="butt"/>
<path d="M669.2 313.3 C672.7 314.5 683.9 318.4 690.5 320.5 C697.1 322.6 705.7 325.0 708.8 325.9" stroke="#1cf01c" stroke-width="2.2" fill="none" stroke-linecap="butt"/>
<path d="M669.2 317.8 C672.7 319.0 683.9 322.8 690.5 324.9 C697.1 327.0 705.7 329.5 708.8 330.4" stroke="#1cf01c" stroke-width="2.2" fill="none" stroke-linecap="butt"/>
<path d="M669.2 322.3 C672.7 323.5 683.9 327.3 690.5 329.4 C697.1 331.5 705.7 334.0 708.8 334.9" stroke="#9ee212" stroke-width="2.2" fill="none" stroke-linecap="butt"/>
<path d="M669.2 326.8 C672.7 327.9 683.9 331.8 690.5 333.9 C697.1 336.0 705.7 338.4 708.8 339.4" stroke="#9ee212" stroke-width="2.2" fill="none" stroke-linecap="butt"/>
<path d="M838.7 190.0 C840.2 191.7 844.9 197.2 847.8 200.2 C850.7 203.1 854.6 206.6 855.9 207.9" stroke="#1622ff" stroke-width="3.0" fill="none" stroke-linecap="butt"/>
<path d="M826.0 195.7h2.9v2.9h-2.9zM829.1 197.1h2.9v2.9h-2.9zM823.0 194.6h2.9v2.9h-2.9z" fill="#e41212"/>
<path d="M813.8 208.5h2.9v2.9h-2.9z" fill="#ffa200"/>
<path d="M797.6 197.7h2.9v2.9h-2.9zM798.0 202.8h2.9v2.9h-2.9z" fill="#9ee212"/>
<path d="M874.2 203.2 C875.1 206.1 879.3 213.9 879.3 220.5 C879.3 227.1 877.1 236.1 874.2 242.8 C871.3 249.6 866.4 256.1 862.0 261.1 C857.6 266.1 850.2 270.9 847.8 272.9" stroke="#8a10ff" stroke-width="2.6" fill="none" stroke-linecap="butt"/>
<path d="M797.0 282.5 C799.0 281.6 804.5 278.6 809.2 277.4 C813.9 276.2 820.2 276.0 825.4 275.3 C830.7 274.7 838.2 274.0 840.7 273.7" stroke="#8a10ff" stroke-width="2.8" fill="none" stroke-dasharray="2.8 2.2"/>
<path d="M811.2 253.0 L797.0 257.1" stroke="#8a10ff" stroke-width="2.8" fill="none" stroke-dasharray="2.8 0.6"/>
<path d="M902.7 190.0 C905.4 193.4 915.5 204.2 918.9 210.3 C922.3 216.4 922.5 214.4 923.0 226.6 C923.5 238.8 922.1 274.0 922.0 283.5" stroke="#5a14ff" stroke-width="2.4" fill="none" stroke-linecap="butt"/>
<path d="M921.0 190.0 L918.9 210.3" stroke="#1622ff" stroke-width="2.2" fill="none" stroke-linecap="butt"/>
<path d="M923.0 220.5 L930.1 230.6 L928.1 267.2" stroke="#1622ff" stroke-width="2.6" fill="none" stroke-dasharray="2.6 0.6"/>
<path d="M935.2 270.3 L934.8 283.5 L929.1 307.9 L927.1 314.0" stroke="#1622ff" stroke-width="2.6" fill="none" stroke-dasharray="2.6 0.6"/>
<path d="M899.2 192.2h2.9v2.9h-2.9zM921.5 205.8h2.9v2.9h-2.9zM923.6 208.9h2.9v2.9h-2.9zM925.6 207.2h2.9v2.9h-2.9zM925.6 197.7h2.9v2.9h-2.9z" fill="#14d2f2"/>
<path d="M917.5 192.6h2.9v2.9h-2.9zM893.5 209.3h2.9v2.9h-2.9zM913.8 215.0h2.9v2.9h-2.9zM824.0 267.8h2.9v2.9h-2.9z" fill="#1cf01c"/>
<path d="M928.7 190.6h2.9v2.9h-2.9zM924.0 233.3h2.9v2.9h-2.9zM931.3 191.6h2.9v2.9h-2.9z" fill="#1a62ff"/>
<path d="M908.7 276.5h2.6v2.6h-2.6zM908.9 276.2h2.6v2.6h-2.6zM907.3 276.9h2.6v2.6h-2.6zM911.1 273.8h2.6v2.6h-2.6zM910.1 275.1h2.6v2.6h-2.6zM909.6 273.0h2.6v2.6h-2.6zM911.6 276.0h2.6v2.6h-2.6zM909.9 274.5h2.6v2.6h-2.6zM911.1 275.6h2.6v2.6h-2.6zM907.8 274.0h2.6v2.6h-2.6z" fill="#1cf01c"/>
<path d="M914.0 268.8h2.9v2.9h-2.9zM916.5 281.0h2.9v2.9h-2.9z" fill="#1cf01c"/>
<path d="M919.5 283.0h2.9v2.9h-2.9z" fill="#14d2f2"/>
<path d="M917.1 283.7h2.9v2.9h-2.9z" fill="#8a10ff"/>
<path d="M889.0 285.7h2.9v2.9h-2.9zM902.6 284.5h2.9v2.9h-2.9zM877.9 286.1h2.9v2.9h-2.9z" fill="#8a10ff"/>
<path d="M797.0 296.7 L862.0 294.7 L870.2 288.6" stroke="#1622ff" stroke-width="2.8" fill="none" stroke-dasharray="2.8 4.2"/>
<path d="M797.0 310.9 C803.8 311.2 822.1 312.3 837.6 312.9 C853.2 313.6 875.6 314.7 890.5 315.0 C905.4 315.2 921.0 314.5 927.1 314.4" stroke="#1a62ff" stroke-width="2.8" fill="none" stroke-dasharray="2.8 4.2"/>
<path d="M797.0 324.1 L843.7 330.0" stroke="#14d2f2" stroke-width="2.8" fill="none" stroke-dasharray="2.8 3.7"/>
<path d="M802.7 295.2h2.9v2.9h-2.9zM803.3 297.3h2.9v2.9h-2.9zM807.7 300.3h2.9v2.9h-2.9zM810.8 303.4h2.9v2.9h-2.9zM813.8 306.4h2.9v2.9h-2.9zM835.2 305.4h2.9v2.9h-2.9zM833.1 308.4h2.9v2.9h-2.9zM797.2 303.4h2.9v2.9h-2.9z" fill="#9ee212"/>
<path d="M895.6 311.5 L893.5 322.1" stroke="#9ee212" stroke-width="2.6" fill="none" stroke-linecap="butt"/>
<path d="M906.3 316.9h2.6v2.6h-2.6zM905.6 317.8h2.6v2.6h-2.6zM907.8 310.3h2.6v2.6h-2.6zM905.7 312.3h2.6v2.6h-2.6zM906.4 318.1h2.6v2.6h-2.6zM908.2 310.3h2.6v2.6h-2.6zM907.8 306.8h2.6v2.6h-2.6zM906.3 309.3h2.6v2.6h-2.6zM907.8 314.8h2.6v2.6h-2.6zM908.5 309.0h2.6v2.6h-2.6zM906.8 315.3h2.6v2.6h-2.6zM905.7 308.8h2.6v2.6h-2.6zM907.0 306.2h2.6v2.6h-2.6zM907.9 307.0h2.6v2.6h-2.6z" fill="#1cf01c"/>
<path d="M911.4 299.3h2.9v2.9h-2.9zM903.3 325.7h2.9v2.9h-2.9z" fill="#1cf01c"/>
<path d="M917.1 303.4h2.9v2.9h-2.9zM916.7 300.3h2.9v2.9h-2.9z" fill="#14d2f2"/>
<path d="M404.8 329.6h2.9v2.9h-2.9zM402.7 333.6h2.9v2.9h-2.9zM406.8 336.7h2.9v2.9h-2.9z" fill="#1622ff"/>
<path d="M399.7 351.9h2.9v2.9h-2.9zM404.8 354.0h2.9v2.9h-2.9z" fill="#14d2f2"/>
<path d="M413.7 347.3 L413.9 370.6 L416.4 388.9 L418.4 399.5" stroke="#f6ea00" stroke-width="2.8" fill="none" stroke-dasharray="2.8 0.6"/>
<path d="M406.8 365.1h2.9v2.9h-2.9z" fill="#14e2a4"/>
<path d="M417.0 365.1h2.9v2.9h-2.9zM421.0 368.2h2.9v2.9h-2.9z" fill="#1cf01c"/>
<path d="M414.9 372.7 L434.7 380.8" stroke="#1cf01c" stroke-width="3.0" fill="none" stroke-linecap="butt"/>
<path d="M419.0 381.0h2.9v2.9h-2.9zM424.5 383.0h2.9v2.9h-2.9zM429.8 384.4h2.9v2.9h-2.9zM434.2 387.1h2.9v2.9h-2.9z" fill="#1cf01c"/>
<path d="M434.2 393.2h2.9v2.9h-2.9zM439.9 394.2h2.9v2.9h-2.9zM445.4 396.0h2.9v2.9h-2.9zM448.4 398.3h2.9v2.9h-2.9z" fill="#f6ea00"/>
<path d="M429.1 415.5h1.8v1.8h-1.8z" fill="#f6ea00"/>
<path d="M506.8 333.7 C507.5 336.4 509.2 344.8 510.9 350.3 C512.6 355.8 514.8 362.3 517.0 366.6 C519.2 370.8 522.9 374.2 524.1 375.7" stroke="#f6ea00" stroke-width="2.2" fill="none" stroke-linecap="butt"/>
<path d="M609.2 347.3 L628.5 351.9" stroke="#ffc400" stroke-width="2.4" fill="none" stroke-linecap="butt"/>
<path d="M608.2 339.1 L653.9 351.3" stroke="#9ee212" stroke-width="2.2" fill="none" stroke-linecap="butt"/>
<path d="M624.5 336.1 L656.0 344.2" stroke="#9ee212" stroke-width="2.2" fill="none" stroke-linecap="butt"/>
<path d="M628.5 330.0 L658.0 339.1" stroke="#1cf01c" stroke-width="2.2" fill="none" stroke-linecap="butt"/>
<path d="M656.0 336.1 L662.1 352.4" stroke="#f6ea00" stroke-width="2.8" fill="none" stroke-dasharray="2.8 0.6"/>
<path d="M647.4 356.6h2.9v2.9h-2.9zM650.4 357.0h2.9v2.9h-2.9zM656.5 357.0h2.9v2.9h-2.9z" fill="#f6ea00"/>
<path d="M669.2 334.1 L702.7 347.3" stroke="#9ee212" stroke-width="2.4" fill="none" stroke-linecap="butt"/>
<path d="M674.3 330.0 L702.7 340.2" stroke="#1cf01c" stroke-width="2.4" fill="none" stroke-linecap="butt"/>
<path d="M711.2 329.9h2.6v2.6h-2.6zM723.2 334.2h2.6v2.6h-2.6zM707.7 332.4h2.6v2.6h-2.6zM724.8 339.9h2.6v2.6h-2.6zM716.0 333.7h2.6v2.6h-2.6zM724.9 338.1h2.6v2.6h-2.6zM721.1 332.9h2.6v2.6h-2.6zM721.9 338.1h2.6v2.6h-2.6zM711.0 333.0h2.6v2.6h-2.6zM708.7 330.6h2.6v2.6h-2.6zM725.8 336.7h2.6v2.6h-2.6zM708.3 333.1h2.6v2.6h-2.6zM710.7 338.8h2.6v2.6h-2.6zM721.9 334.0h2.6v2.6h-2.6zM716.8 333.3h2.6v2.6h-2.6zM711.5 330.7h2.6v2.6h-2.6zM707.2 330.4h2.6v2.6h-2.6zM723.1 335.3h2.6v2.6h-2.6zM724.9 336.5h2.6v2.6h-2.6zM724.9 338.7h2.6v2.6h-2.6zM708.9 332.7h2.6v2.6h-2.6zM728.0 336.0h2.6v2.6h-2.6zM719.7 332.4h2.6v2.6h-2.6zM707.7 336.3h2.6v2.6h-2.6zM723.0 334.2h2.6v2.6h-2.6zM719.4 336.6h2.6v2.6h-2.6zM711.9 330.9h2.6v2.6h-2.6zM718.8 338.9h2.6v2.6h-2.6zM724.2 339.1h2.6v2.6h-2.6zM722.8 336.6h2.6v2.6h-2.6zM723.7 332.7h2.6v2.6h-2.6zM725.0 336.4h2.6v2.6h-2.6zM724.0 342.4h2.6v2.6h-2.6zM718.1 330.5h2.6v2.6h-2.6zM727.1 338.8h2.6v2.6h-2.6zM726.8 336.2h2.6v2.6h-2.6zM707.6 337.0h2.6v2.6h-2.6zM714.4 331.1h2.6v2.6h-2.6zM713.1 335.8h2.6v2.6h-2.6zM704.1 332.2h2.6v2.6h-2.6zM715.2 335.6h2.6v2.6h-2.6zM706.4 335.2h2.6v2.6h-2.6zM723.4 342.3h2.6v2.6h-2.6zM711.4 336.7h2.6v2.6h-2.6zM712.8 337.6h2.6v2.6h-2.6z" fill="#1cf01c"/>
<path d="M725.1 330.0 L728.1 345.2" stroke="#1cf01c" stroke-width="2.6" fill="none" stroke-linecap="butt"/>
<path d="M705.7 356.4 L716.9 350.3 L728.1 351.3" stroke="#9ee212" stroke-width="2.2" fill="none" stroke-linecap="butt"/>
<path d="M710.8 358.4 L725.1 354.4" stroke="#9ee212" stroke-width="2.2" fill="none" stroke-linecap="butt"/>
<path d="M727.1 351.3 L724.0 368.6 L719.0 376.7" stroke="#f6ea00" stroke-width="2.8" fill="none" stroke-dasharray="2.8 0.6"/>
<path d="M704.7 371.7 L717.9 378.4" stroke="#ffc400" stroke-width="2.4" fill="none" stroke-linecap="butt"/>
<path d="M736.2 332.0 L797.0 340.2" stroke="#14e2a4" stroke-width="2.8" fill="none" stroke-dasharray="2.8 1.8"/>
<path d="M738.3 342.2 L797.0 354.4" stroke="#14e2a4" stroke-width="2.8" fill="none" stroke-dasharray="2.8 1.8"/>
<path d="M746.4 349.3 L797.0 359.5" stroke="#1cf01c" stroke-width="3.0" fill="none" stroke-linecap="butt"/>
<path d="M746.4 353.4 L761.6 359.5" stroke="#1cf01c" stroke-width="2.8" fill="none" stroke-dasharray="2.8 0.6"/>
<path d="M740.3 362.5 L757.6 367.6" stroke="#9ee212" stroke-width="2.8" fill="none" stroke-dasharray="2.8 0.6"/>
<path d="M740.3 370.6 L757.6 375.7" stroke="#f6ea00" stroke-width="2.8" fill="none" stroke-dasharray="2.8 0.6"/>
<path d="M761.6 360.5 L757.6 367.6" stroke="#9ee212" stroke-width="2.8" fill="none" stroke-dasharray="2.8 0.6"/>
<path d="M757.7 353.0h2.6v2.6h-2.6zM752.4 353.3h2.6v2.6h-2.6zM752.7 349.6h2.6v2.6h-2.6zM749.2 355.4h2.6v2.6h-2.6zM754.6 350.9h2.6v2.6h-2.6zM746.3 353.8h2.6v2.6h-2.6zM753.1 353.3h2.6v2.6h-2.6zM754.7 350.2h2.6v2.6h-2.6zM756.7 354.7h2.6v2.6h-2.6zM752.1 353.1h2.6v2.6h-2.6zM749.5 350.3h2.6v2.6h-2.6zM751.1 350.4h2.6v2.6h-2.6z" fill="#1cf01c"/>
<path d="M733.2 375.1 L757.6 385.3" stroke="#ffa200" stroke-width="2.8" fill="none" stroke-dasharray="2.8 0.6"/>
<path d="M757.6 385.3 L797.0 371.7" stroke="#ffa200" stroke-width="2.4" fill="none" stroke-linecap="butt"/>
<path d="M773.8 361.5 L797.0 367.6" stroke="#1cf01c" stroke-width="2.8" fill="none" stroke-dasharray="2.8 2.2"/>
<path d="M776.4 374.3h2.9v2.9h-2.9zM784.6 376.3h2.9v2.9h-2.9zM789.6 377.3h2.9v2.9h-2.9z" fill="#1cf01c"/>
<path d="M782.5 387.5h2.9v2.9h-2.9zM787.6 389.1h2.9v2.9h-2.9zM793.7 392.0h2.9v2.9h-2.9zM762.2 373.7h2.9v2.9h-2.9zM768.3 371.2h2.9v2.9h-2.9z" fill="#f6ea00"/>
<path d="M783.6 399.1h2.9v2.9h-2.9zM788.6 401.7h2.9v2.9h-2.9zM793.7 404.1h2.9v2.9h-2.9z" fill="#ffa200"/>
<path d="M841.3 328.6h2.8v2.8h-2.8zM850.5 329.6h2.8v2.8h-2.8zM862.7 331.6h2.8v2.8h-2.8zM873.8 333.1h2.8v2.8h-2.8zM885.0 334.3h2.8v2.8h-2.8zM897.2 335.1h2.8v2.8h-2.8zM907.0 335.1h2.8v2.8h-2.8zM917.5 334.7h2.8v2.8h-2.8zM918.5 330.6h2.8v2.8h-2.8z" fill="#1a62ff"/>
<path d="M904.7 331.0 L904.7 339.1" stroke="#1cf01c" stroke-width="2.8" fill="none" stroke-dasharray="2.8 0.6"/>
<path d="M978.5 342.8h2.8v2.8h-2.8z" fill="#1622ff"/>
<path d="M799.0 341.8 L840.7 349.3 L903.7 360.5" stroke="#14e2a4" stroke-width="2.6" fill="none" stroke-dasharray="2.6 6.9"/>
<path d="M913.0 356.0h2.9v2.9h-2.9zM914.4 352.5h2.9v2.9h-2.9zM913.0 360.0h2.9v2.9h-2.9z" fill="#14d2f2"/>
<path d="M798.0 354.4 L837.6 364.5 L897.2 378.4" stroke="#1cf01c" stroke-width="2.8" fill="none" stroke-dasharray="2.8 6.2"/>
<path d="M797.0 360.1 L839.7 372.7 L884.4 385.9 L898.6 388.9" stroke="#1cf01c" stroke-width="3.0" fill="none" stroke-linecap="butt"/>
<path d="M898.6 389.3 L899.6 380.8 L902.7 379.8" stroke="#1cf01c" stroke-width="2.6" fill="none" stroke-linecap="butt"/>
<path d="M797.0 352.4 L802.1 350.3" stroke="#ffa200" stroke-width="2.6" fill="none" stroke-linecap="butt"/>
<path d="M797.0 369.6 L805.1 365.6" stroke="#ffa200" stroke-width="2.6" fill="none" stroke-linecap="butt"/>
<path d="M865.1 378.4 C862.2 380.5 854.1 387.0 847.8 391.0 C841.5 394.9 834.4 398.9 827.5 402.1 C820.5 405.4 809.7 408.9 806.1 410.3" stroke="#ffa200" stroke-width="2.8" fill="none" stroke-dasharray="2.8 0.6"/>
<path d="M799.2 406.8h2.9v2.9h-2.9z" fill="#ffa200"/>
<path d="M797.0 379.8 L829.5 392.6" stroke="#9ee212" stroke-width="2.8" fill="none" stroke-dasharray="2.8 5.7"/>
<path d="M805.1 370.6 L831.5 378.4 L869.1 392.0" stroke="#1cf01c" stroke-width="2.8" fill="none" stroke-dasharray="2.8 6.2"/>
<path d="M798.6 394.0h2.9v2.9h-2.9zM804.7 396.2h2.9v2.9h-2.9zM810.8 398.7h2.9v2.9h-2.9zM816.9 401.3h2.9v2.9h-2.9zM823.0 404.1h2.9v2.9h-2.9zM849.4 393.6h2.9v2.9h-2.9zM851.4 399.7h2.9v2.9h-2.9zM862.6 393.2h2.9v2.9h-2.9zM860.6 396.6h2.9v2.9h-2.9zM868.7 394.6h2.9v2.9h-2.9zM850.4 403.7h2.9v2.9h-2.9zM851.4 409.4h2.9v2.9h-2.9zM834.2 410.9h2.9v2.9h-2.9zM841.9 413.9h2.9v2.9h-2.9zM850.0 418.0h2.9v2.9h-2.9zM855.1 417.6h2.9v2.9h-2.9z" fill="#f6ea00"/>
<path d="M856.5 403.7h2.9v2.9h-2.9zM866.7 402.7h2.9v2.9h-2.9zM847.0 400.1h2.9v2.9h-2.9zM839.2 397.2h2.9v2.9h-2.9zM859.6 400.7h2.9v2.9h-2.9z" fill="#9ee212"/>
<path d="M888.9 363.5 L886.4 376.7" stroke="#9ee212" stroke-width="2.8" fill="none" stroke-dasharray="2.8 0.6"/>
<path d="M886.4 376.7 L883.4 395.0" stroke="#f6ea00" stroke-width="3.0" fill="none" stroke-dasharray="3.0 0.6"/>
<path d="M883.4 395.0 L881.9 411.3" stroke="#9ee212" stroke-width="2.8" fill="none" stroke-dasharray="2.8 0.8"/>
<path d="M905.3 373.3h2.9v2.9h-2.9zM911.0 372.2h2.9v2.9h-2.9zM904.9 377.3h2.9v2.9h-2.9zM905.3 381.4h2.9v2.9h-2.9zM913.0 385.0h2.9v2.9h-2.9zM916.5 387.1h2.9v2.9h-2.9zM897.2 392.6h2.9v2.9h-2.9zM896.7 396.6h2.9v2.9h-2.9zM887.0 394.6h2.9v2.9h-2.9z" fill="#1cf01c"/>
<path d="M969.9 371.2h2.9v2.9h-2.9z" fill="#14d2f2"/>
<path d="M961.2 394.0h2.9v2.9h-2.9zM976.0 396.6h2.9v2.9h-2.9z" fill="#14e2a4"/>
<path d="M943.3 402.1 L961.6 407.2" stroke="#1cf01c" stroke-width="2.6" fill="none" stroke-linecap="butt"/>
<path d="M966.6 406.3h3.0v3.0h-3.0zM945.9 413.8h3.0v3.0h-3.0z" fill="#1cf01c"/></svg>
</div>
<div class="abs" id="rtab"></div>

<!-- status -->
<div class="abs" id="sep"></div>
<div class="abs" id="resetframe"></div>
<div class="abs" id="resetb">Reset</div>
<div class="abs" id="statusin"></div>
<div class="abs" id="fps">31 fps</div>

<!-- terminal -->
<div class="abs" id="term"><pre>
 time: 0.95422, max time: 8.6755 milliseconds between udp receive and msgpack export, histogram=[0,40,379,114,22,20,6,4,1,0,0]
[sick_generic_caller-1] [INFO] [1688386570.304106103] [sick_scan]: MsgPackExporter:   0 udp packages still in input fifo, 0 messages still in msgpack output fifo, curre
nt message count: 9
[sick_generic_caller-1] [INFO] [1688386570.304498861] [sick_scan]: MsgPackExporter: 593 udp messages received, 593 messages exported, 0% package lost.
[sick_generic_caller-1] [INFO] [1688386570.304636361] [sick_scan]: MsgPackExporter: max. 1 udp messages buffered, max 1 export messages buffered.
[sick_generic_caller-1] [INFO] [1688386570.304866064] [sick_scan]: MsgPackExporter: 593 msgpacks exported at 4.49228 Hz, mean time: 2.85914 milliseconds/msgpack, stddev
 time: 0.954775, max time: 8.6755 milliseconds between udp receive and msgpack export, histogram=[0,41,382,116,22,21,6,4,1,0,0]
[sick_generic_caller-1] [INFO] [1688386571.989798647] [sick_scan]: MsgPackExporter:   0 udp packages still in input fifo, 0 messages still in msgpack output fifo, curre
nt message count: 4
[sick_generic_caller-1] [INFO] [1688386571.990043683] [sick_scan]: MsgPackExporter: 600 udp messages received, 600 messages exported, 0% package lost.
[sick_generic_caller-1] [INFO] [1688386571.990151775] [sick_scan]: MsgPackExporter: max. 1 udp messages buffered, max 1 export messages buffered.
[sick_generic_caller-1] [INFO] [1688386571.990280571] [sick_scan]: MsgPackExporter: 600 msgpacks exported at 4.488 Hz, mean time: 2.86256 milliseconds/msgpack, stddev t
ime: 0.955559, max time: 8.6755 milliseconds between udp receive and msgpack export, histogram=[0,41,386,118,22,22,6,4,1,0,0]
</pre></div>
<div class="abs" id="tsb"></div>
<div class="abs" id="tthumb"></div>
<div class="abs" id="cursor"></div>
<!-- hand -->
<svg class="abs" style="left:13px;top:12px" width="20" height="19" viewBox="13 12 20 19"><path d="M18.7 23.6 L18.7 15.3 Q18.7 13.9 20.25 13.9 Q21.8 13.9 21.8 15.3 L21.8 19.4 Q23.2 18.1 24.6 19.3 Q26 18.3 27.5 19.7 Q29 18.9 30.3 20.5 L30.3 26.6 Q30.3 29.2 27.7 29.2 L20.2 29.2 Q17.7 29.2 16.8 26.9 L15.2 23.3 Q14.7 21.5 16.3 21.3 Q17.7 21.3 18.7 23.6 Z" fill="#fff" stroke="#111" stroke-width="1.4" stroke-linejoin="round"/><path d="M21.8 19.4 V22.6 M24.6 19.3 V22.6 M27.5 19.7 V22.6" stroke="#111" stroke-width="1.2" fill="none"/></svg>
<!-- move camera -->
<svg class="abs" style="left:96px;top:13px" width="18" height="17" viewBox="0 0 18 17"><g fill="#fff" stroke="#444" stroke-width="1" stroke-linejoin="round"><path d="M9 0.8 L12.2 4.3 L10 4.3 L10 11.6 L12.2 11.6 L9 15.3 L5.8 11.6 L8 11.6 L8 4.3 L5.8 4.3 Z" stroke="#777" fill="#cfcfcf"/><path d="M1.5 4.3 L4.6 5.3 Q9 2.8 13.4 5.3 L16.5 4.3 L16.5 8.6 L13.4 7.7 Q9 10.5 4.6 7.7 L1.5 8.6 Z" fill="none" stroke="#222" stroke-width="1.1"/><path d="M9 0.8 L12.2 4.3 L5.8 4.3 Z M9 15.3 L12.2 11.6 L5.8 11.6 Z" stroke="#666" fill="#fff"/></g></svg>
<!-- select -->
<svg class="abs" style="left:212px;top:14px" width="16" height="13" viewBox="0 0 16 13"><rect x="0.5" y="0.5" width="15" height="12" fill="#fdf7c3" stroke="#111" stroke-width="1" stroke-dasharray="2 1"/><path d="M16 9.5 L16 13 L12.5 13 Z" fill="#111"/></svg>
<!-- focus -->
<svg class="abs" style="left:286px;top:13px" width="17" height="17" viewBox="0 0 17 17"><g fill="none" stroke="#666" stroke-width="1"><circle cx="8.5" cy="8.5" r="5.2" fill="#f7f7f7"/><path d="M8.5 0.5 V5 M8.5 12 V16.5 M0.5 8.5 H5 M12 8.5 H16.5" stroke-width="1.6" stroke="#777"/><path d="M6.5 4 V13 M10.5 4 V13 M4 6.5 H13 M4 10.5 H13" stroke="#888" stroke-width="0.9"/></g></svg>
<!-- measure -->
<svg class="abs" style="left:402px;top:18px" width="16" height="6" viewBox="0 0 16 6"><rect x="0.5" y="0.5" width="15" height="5" rx="0.8" fill="#efe3a2" stroke="#5d5d55" stroke-width="1"/><path d="M3 1 V3 M5 1 V2.5 M7 1 V3 M9 1 V2.5 M11 1 V3 M13 1 V2.5" stroke="#7b775f" stroke-width="0.9"/></svg>
<!-- arrows -->
<svg class="abs" style="left:488px;top:13px" width="18" height="15" viewBox="0 0 18 15"><path d="M1.8 13.3 L10.5 6.5" stroke="#0cf02c" stroke-width="2.7" stroke-linecap="round"/><path d="M17 1 L8.6 4.2 L12.8 9.2 Z" fill="#0cf02c"/><path d="M8.6 4.2 L12.8 9.2 L11.4 6.2Z" fill="#0b8a1c"/></svg>
<svg class="abs" style="left:623px;top:13px" width="18" height="15" viewBox="0 0 18 15"><path d="M1.8 13.3 L10.5 6.5" stroke="#0cf02c" stroke-width="2.7" stroke-linecap="round"/><path d="M17 1 L8.6 4.2 L12.8 9.2 Z" fill="#0cf02c"/><path d="M8.6 4.2 L12.8 9.2 L11.4 6.2Z" fill="#0b8a1c"/></svg>
<!-- pin -->
<svg class="abs" style="left:738px;top:12px" width="12" height="17" viewBox="0 0 12 17"><defs><linearGradient id="pg" x1="0" y1="0" x2="0" y2="1"><stop offset="0" stop-color="#e0552c"/><stop offset="0.5" stop-color="#b2441d"/><stop offset="1" stop-color="#5b2a0c"/></linearGradient></defs><path d="M6 16.6 C4.5 12.5 1 9.5 1 5.9 A5 5 0 0 1 11 5.9 C11 9.5 7.5 12.5 6 16.6 Z" fill="url(#pg)"/><circle cx="6" cy="5.6" r="1.7" fill="#fbeee6"/></svg>
<!-- plus / minus -->
<svg class="abs" style="left:849px;top:15px" width="14" height="13" viewBox="0 0 14 13"><path d="M5.2 1 H8.8 V4.7 H12.5 V8.3 H8.8 V12 H5.2 V8.3 H1.5 V4.7 H5.2 Z" fill="#a9c6ea" stroke="#3870bd" stroke-width="1.2" stroke-linejoin="round"/></svg>
<svg class="abs" style="left:895px;top:18px" width="14" height="6" viewBox="0 0 14 6"><rect x="1" y="0.8" width="12" height="4.2" rx="1" fill="#a9c6ea" stroke="#3870bd" stroke-width="1.2"/></svg>
<svg class="abs" style="left:914px;top:21px" width="9" height="6" viewBox="0 0 9 6"><path d="M0.8 0.8 H8.2 L4.5 5.6 Z" fill="#8b8b8b"/></svg>
<!-- toolbar handle -->
<div class="abs" style="left:4px;top:16px;width:4px;height:1px;background:#d6d3cf;box-shadow:0 3px 0 #d6d3cf,0 6px 0 #d6d3cf"></div>
<!-- displays icon -->
<svg class="abs" style="left:4px;top:45px" width="17" height="16" viewBox="0 0 17 16"><rect x="0.6" y="0.6" width="15.8" height="11" rx="1.2" fill="#222" /><rect x="1.8" y="1.8" width="4.6" height="8.6" fill="#c26a6a"/><rect x="6.4" y="1.8" width="4.4" height="8.6" fill="#7dc275"/><rect x="10.8" y="1.8" width="4.4" height="8.6" fill="#9a9be6"/><rect x="7.3" y="11.5" width="2.4" height="2" fill="#222"/><rect x="4" y="13.3" width="9" height="1.7" rx="0.8" fill="#222"/></svg>
<!-- close x -->
<svg class="abs" style="left:346px;top:45px" width="12" height="14" viewBox="0 0 12 14"><path d="M3 4 L9 10 M9 4 L3 10" stroke="#4a4a4a" stroke-width="2.2" stroke-linecap="butt"/></svg>
<!-- scroll arrows -->
<svg class="abs" style="left:351px;top:69px" width="8" height="5" viewBox="0 0 8 5"><path d="M0.5 4.5 L4 0.8 L7.5 4.5 Z" fill="#b8b5b0"/></svg>
<svg class="abs" style="left:351px;top:425px" width="8" height="5" viewBox="0 0 8 5"><path d="M0.5 0.5 L4 4.4 L7.5 0.5 Z" fill="#4a4a4a"/></svg>
<!-- splitter arrows -->
<svg class="abs" style="left:373px;top:255px" width="6" height="9" viewBox="0 0 6 9"><path d="M5.2 0.8 V8.2 L0.8 4.5 Z" fill="#7c7c7c"/></svg>
<svg class="abs" style="left:1013px;top:255px" width="6" height="9" viewBox="0 0 6 9"><path d="M5.2 0.8 V8.2 L0.8 4.5 Z" fill="#7c7c7c"/></svg>
<!-- splitter grip under tree -->
<div class="abs" style="left:177px;top:436px;width:1px;height:4px;background:#c9c6c1;box-shadow:2px 0 0 #c9c6c1,4px 0 0 #c9c6c1"></div>
<!-- resize grip -->
<svg class="abs" style="left:1008px;top:493px" width="13" height="13" viewBox="0 0 13 13"><g fill="#fff"><rect x="10" y="1" width="2" height="2"/><rect x="7" y="4" width="2" height="2"/><rect x="10" y="4" width="2" height="2"/><rect x="4" y="7" width="2" height="2"/><rect x="7" y="7" width="2" height="2"/><rect x="10" y="7" width="2" height="2"/><rect x="1" y="10" width="2" height="2"/><rect x="4" y="10" width="2" height="2"/><rect x="7" y="10" width="2" height="2"/><rect x="10" y="10" width="2" height="2"/></g></svg>
<svg class="abs" style="left:1013px;top:676px" width="9" height="6" viewBox="0 0 9 6"><path d="M0.6 0.6 H8.4 L4.5 5.6 Z" fill="#8f8f8f"/></svg>

</body></html>
